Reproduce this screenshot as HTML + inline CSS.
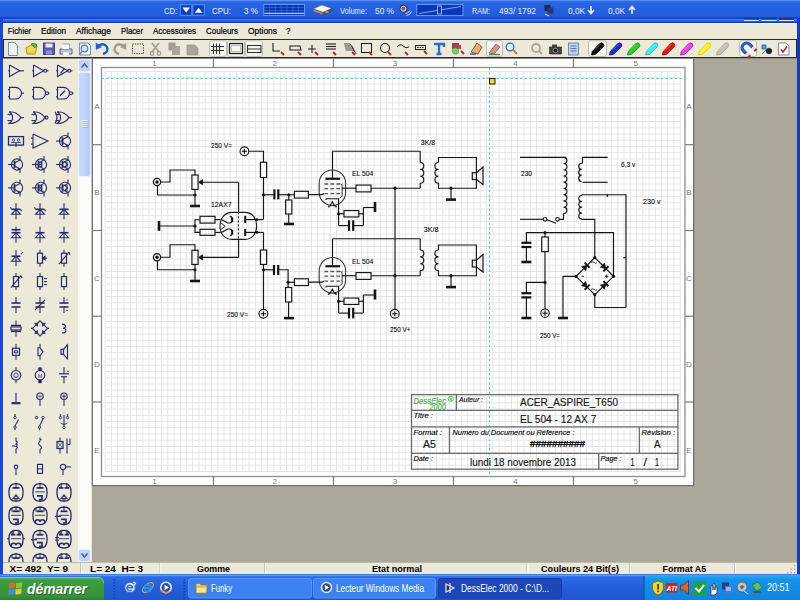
<!DOCTYPE html>
<html><head><meta charset="utf-8"><style>
html,body{margin:0;padding:0;width:800px;height:600px;overflow:hidden;background:#ECE9D8}
svg{position:absolute;left:0;top:0;display:block}
</style></head><body>
<svg width="800" height="600" viewBox="0 0 800 600" shape-rendering="auto">
<rect x="0" y="0" width="800" height="600" fill="#ECE9D8" />
<defs><linearGradient id="tb" x1="0" y1="0" x2="0" y2="1"><stop offset="0" stop-color="#3C7BF0"/><stop offset="0.12" stop-color="#2A66E4"/><stop offset="0.6" stop-color="#245FDF"/><stop offset="1" stop-color="#2259DA"/></linearGradient><linearGradient id="task" x1="0" y1="0" x2="0" y2="1"><stop offset="0" stop-color="#3A81F3"/><stop offset="0.1" stop-color="#2D6CE6"/><stop offset="0.5" stop-color="#245EDB"/><stop offset="1" stop-color="#1F55CF"/></linearGradient><linearGradient id="start" x1="0" y1="0" x2="0" y2="1"><stop offset="0" stop-color="#5EB55E"/><stop offset="0.15" stop-color="#3C9F3C"/><stop offset="0.8" stop-color="#37953A"/><stop offset="1" stop-color="#2F7F32"/></linearGradient><linearGradient id="tray" x1="0" y1="0" x2="0" y2="1"><stop offset="0" stop-color="#2FA6F5"/><stop offset="0.15" stop-color="#1595EC"/><stop offset="1" stop-color="#0F83E0"/></linearGradient><linearGradient id="sbth" x1="0" y1="0" x2="1" y2="0"><stop offset="0" stop-color="#CCDBFD"/><stop offset="0.5" stop-color="#C2D3FB"/><stop offset="1" stop-color="#B4C8F6"/></linearGradient></defs>
<rect x="0" y="0" width="800" height="17.5" fill="url(#tb)" />
<rect x="0" y="17" width="800" height="2.5" fill="#1548C4" />
<rect x="0" y="19.5" width="800" height="2.6" fill="#1C62EC" />
<rect x="0" y="22" width="800" height="1.2" fill="#0A36B8" />
<rect x="0" y="19" width="3" height="555" fill="#1747D4" />
<rect x="797" y="19" width="3" height="555" fill="#0F3EC4" />
<rect x="3" y="23" width="794" height="16" fill="#ECE9D8" />
<rect x="3" y="39" width="794" height="1.5" fill="#2a2a2a" />
<rect x="3" y="40" width="794" height="17" fill="#ECE9D8" />
<rect x="3" y="57" width="794" height="1.5" fill="#2a2a2a" />
<rect x="3" y="40" width="1" height="17" fill="#2a2a2a" />
<rect x="796" y="39" width="1" height="19" fill="#2a2a2a" />
<rect x="3" y="59" width="75" height="503" fill="#ECE9D8" />
<rect x="78" y="59" width="13" height="503" fill="#F5F6FA" />
<rect x="92" y="59" width="705" height="503" fill="#ACA899" />
<rect x="3" y="562" width="794" height="12" fill="#ECE9D8" />
<rect x="0" y="574" width="800" height="26" fill="url(#task)" />
<rect x="93" y="59" width="600" height="426" fill="#FFFFFF" />
<rect x="91.7" y="59" width="1.2" height="427" fill="#6E6E6E" />
<rect x="693" y="59" width="1.2" height="427" fill="#6b6b6b" />
<rect x="92" y="485" width="602" height="1.2" fill="#6b6b6b" />
<path d="M105.250,71V472M111.500,71V472M117.750,71V472M124.000,71V472M130.250,71V472M136.500,71V472M142.750,71V472M149.000,71V472M155.250,71V472M161.500,71V472M167.750,71V472M174.000,71V472M180.250,71V472M186.500,71V472M192.750,71V472M199.000,71V472M205.250,71V472M211.500,71V472M217.750,71V472M224.000,71V472M230.250,71V472M236.500,71V472M242.750,71V472M249.000,71V472M255.250,71V472M261.500,71V472M267.750,71V472M274.000,71V472M280.250,71V472M286.500,71V472M292.750,71V472M299.000,71V472M305.250,71V472M311.500,71V472M317.750,71V472M324.000,71V472M330.250,71V472M336.500,71V472M342.750,71V472M349.000,71V472M355.250,71V472M361.500,71V472M367.750,71V472M374.000,71V472M380.250,71V472M386.500,71V472M392.750,71V472M399.000,71V472M405.250,71V472M411.500,71V472M417.750,71V472M424.000,71V472M430.250,71V472M436.500,71V472M442.750,71V472M449.000,71V472M455.250,71V472M461.500,71V472M467.750,71V472M474.000,71V472M480.250,71V472M486.500,71V472M492.750,71V472M499.000,71V472M505.250,71V472M511.500,71V472M517.750,71V472M524.000,71V472M530.250,71V472M536.500,71V472M542.750,71V472M549.000,71V472M555.250,71V472M561.500,71V472M567.750,71V472M574.000,71V472M580.250,71V472M586.500,71V472M592.750,71V472M599.000,71V472M605.250,71V472M611.500,71V472M617.750,71V472M624.000,71V472M630.250,71V472M636.500,71V472M642.750,71V472M649.000,71V472M655.250,71V472M661.500,71V472M667.750,71V472M674.000,71V472M680.250,71V472M105,71.500H681M105,77.750H681M105,84.000H681M105,90.250H681M105,96.500H681M105,102.750H681M105,109.000H681M105,115.250H681M105,121.500H681M105,127.750H681M105,134.000H681M105,140.250H681M105,146.500H681M105,152.750H681M105,159.000H681M105,165.250H681M105,171.500H681M105,177.750H681M105,184.000H681M105,190.250H681M105,196.500H681M105,202.750H681M105,209.000H681M105,215.250H681M105,221.500H681M105,227.750H681M105,234.000H681M105,240.250H681M105,246.500H681M105,252.750H681M105,259.000H681M105,265.250H681M105,271.500H681M105,277.750H681M105,284.000H681M105,290.250H681M105,296.500H681M105,302.750H681M105,309.000H681M105,315.250H681M105,321.500H681M105,327.750H681M105,334.000H681M105,340.250H681M105,346.500H681M105,352.750H681M105,359.000H681M105,365.250H681M105,371.500H681M105,377.750H681M105,384.000H681M105,390.250H681M105,396.500H681M105,402.750H681M105,409.000H681M105,415.250H681M105,421.500H681M105,427.750H681M105,434.000H681M105,440.250H681M105,446.500H681M105,452.750H681M105,459.000H681M105,465.250H681M105,471.500H681" stroke="#E5E5E5" stroke-width="1" fill="none"/>
<rect x="101.50" y="67.50" width="583.50" height="409.00" stroke="#8E8E8E" stroke-width="1.3" fill="none" />
<line x1="213.50" y1="59.00" x2="213.50" y2="67.50" stroke="#7a7a7a" stroke-width="1.2" />
<line x1="213.50" y1="476.00" x2="213.50" y2="485.00" stroke="#7a7a7a" stroke-width="1.2" />
<line x1="333.50" y1="59.00" x2="333.50" y2="67.50" stroke="#7a7a7a" stroke-width="1.2" />
<line x1="333.50" y1="476.00" x2="333.50" y2="485.00" stroke="#7a7a7a" stroke-width="1.2" />
<line x1="453.50" y1="59.00" x2="453.50" y2="67.50" stroke="#7a7a7a" stroke-width="1.2" />
<line x1="453.50" y1="476.00" x2="453.50" y2="485.00" stroke="#7a7a7a" stroke-width="1.2" />
<line x1="573.50" y1="59.00" x2="573.50" y2="67.50" stroke="#7a7a7a" stroke-width="1.2" />
<line x1="573.50" y1="476.00" x2="573.50" y2="485.00" stroke="#7a7a7a" stroke-width="1.2" />
<line x1="92.00" y1="144.70" x2="101.50" y2="144.70" stroke="#7a7a7a" stroke-width="1.2" />
<line x1="685.00" y1="144.70" x2="693.00" y2="144.70" stroke="#7a7a7a" stroke-width="1.2" />
<line x1="92.00" y1="230.50" x2="101.50" y2="230.50" stroke="#7a7a7a" stroke-width="1.2" />
<line x1="685.00" y1="230.50" x2="693.00" y2="230.50" stroke="#7a7a7a" stroke-width="1.2" />
<line x1="92.00" y1="316.20" x2="101.50" y2="316.20" stroke="#7a7a7a" stroke-width="1.2" />
<line x1="685.00" y1="316.20" x2="693.00" y2="316.20" stroke="#7a7a7a" stroke-width="1.2" />
<line x1="92.00" y1="402.00" x2="101.50" y2="402.00" stroke="#7a7a7a" stroke-width="1.2" />
<line x1="685.00" y1="402.00" x2="693.00" y2="402.00" stroke="#7a7a7a" stroke-width="1.2" />
<text x="154.5" y="66" font-family="Liberation Sans" font-size="8" fill="#777" text-anchor="middle" font-weight="normal" font-style="normal" xml:space="preserve" >1</text>
<text x="154.5" y="484" font-family="Liberation Sans" font-size="8" fill="#777" text-anchor="middle" font-weight="normal" font-style="normal" xml:space="preserve" >1</text>
<text x="274.8" y="66" font-family="Liberation Sans" font-size="8" fill="#777" text-anchor="middle" font-weight="normal" font-style="normal" xml:space="preserve" >2</text>
<text x="274.8" y="484" font-family="Liberation Sans" font-size="8" fill="#777" text-anchor="middle" font-weight="normal" font-style="normal" xml:space="preserve" >2</text>
<text x="395.1" y="66" font-family="Liberation Sans" font-size="8" fill="#777" text-anchor="middle" font-weight="normal" font-style="normal" xml:space="preserve" >3</text>
<text x="395.1" y="484" font-family="Liberation Sans" font-size="8" fill="#777" text-anchor="middle" font-weight="normal" font-style="normal" xml:space="preserve" >3</text>
<text x="515.4" y="66" font-family="Liberation Sans" font-size="8" fill="#777" text-anchor="middle" font-weight="normal" font-style="normal" xml:space="preserve" >4</text>
<text x="515.4" y="484" font-family="Liberation Sans" font-size="8" fill="#777" text-anchor="middle" font-weight="normal" font-style="normal" xml:space="preserve" >4</text>
<text x="635.7" y="66" font-family="Liberation Sans" font-size="8" fill="#777" text-anchor="middle" font-weight="normal" font-style="normal" xml:space="preserve" >5</text>
<text x="635.7" y="484" font-family="Liberation Sans" font-size="8" fill="#777" text-anchor="middle" font-weight="normal" font-style="normal" xml:space="preserve" >5</text>
<text x="96.8" y="108.9" font-family="Liberation Sans" font-size="8" fill="#777" text-anchor="middle" font-weight="normal" font-style="normal" xml:space="preserve" >A</text>
<text x="689" y="108.9" font-family="Liberation Sans" font-size="8" fill="#777" text-anchor="middle" font-weight="normal" font-style="normal" xml:space="preserve" >A</text>
<text x="96.8" y="194.9" font-family="Liberation Sans" font-size="8" fill="#777" text-anchor="middle" font-weight="normal" font-style="normal" xml:space="preserve" >B</text>
<text x="689" y="194.9" font-family="Liberation Sans" font-size="8" fill="#777" text-anchor="middle" font-weight="normal" font-style="normal" xml:space="preserve" >B</text>
<text x="96.8" y="280.9" font-family="Liberation Sans" font-size="8" fill="#777" text-anchor="middle" font-weight="normal" font-style="normal" xml:space="preserve" >C</text>
<text x="689" y="280.9" font-family="Liberation Sans" font-size="8" fill="#777" text-anchor="middle" font-weight="normal" font-style="normal" xml:space="preserve" >C</text>
<text x="96.8" y="366.9" font-family="Liberation Sans" font-size="8" fill="#777" text-anchor="middle" font-weight="normal" font-style="normal" xml:space="preserve" >D</text>
<text x="689" y="366.9" font-family="Liberation Sans" font-size="8" fill="#777" text-anchor="middle" font-weight="normal" font-style="normal" xml:space="preserve" >D</text>
<text x="96.8" y="452.9" font-family="Liberation Sans" font-size="8" fill="#777" text-anchor="middle" font-weight="normal" font-style="normal" xml:space="preserve" >E</text>
<text x="689" y="452.9" font-family="Liberation Sans" font-size="8" fill="#777" text-anchor="middle" font-weight="normal" font-style="normal" xml:space="preserve" >E</text>
<line x1="101.50" y1="78.50" x2="685.00" y2="78.50" stroke="#62CACA" stroke-width="1" stroke-dasharray="2.5,2.2"/>
<line x1="489.50" y1="67.50" x2="489.50" y2="476.00" stroke="#62CACA" stroke-width="1" stroke-dasharray="2.5,2.2"/>
<rect x="489.5" y="78.5" width="5.5" height="5.5" fill="#F2D838" stroke="#1a1a00" stroke-width="1"/>
<circle cx="157.00" cy="182.00" r="3.60" stroke="#141414" stroke-width="1.3" fill="none"/>
<circle cx="157.00" cy="182.00" r="1.7" fill="#141414"/>
<polyline points="160.60,182.00 170.00,182.00 170.00,170.00 195.00,170.00 195.00,175.00" stroke="#141414" stroke-width="1.15" fill="none" />
<rect x="191.90" y="175.00" width="6.20" height="14.40" stroke="#141414" stroke-width="1.15" fill="none" />
<polyline points="195.00,189.40 195.00,206.00" stroke="#141414" stroke-width="1.15" fill="none" />
<polyline points="157.50,185.60 157.50,195.00 195.00,195.00" stroke="#141414" stroke-width="1.15" fill="none" />
<circle cx="195.00" cy="195.00" r="1.6" fill="#141414"/>
<line x1="190.00" y1="206.00" x2="200.00" y2="206.00" stroke="#141414" stroke-width="2.6" />
<polyline points="201.00,182.20 238.60,182.20" stroke="#141414" stroke-width="1.15" fill="none" />
<polygon points="198.60,182.20 202.60,179.60 202.60,184.80" stroke="#141414" stroke-width="0.8" fill="#141414" />
<circle cx="157.00" cy="257.25" r="3.60" stroke="#141414" stroke-width="1.3" fill="none"/>
<circle cx="157.00" cy="257.25" r="1.7" fill="#141414"/>
<polyline points="160.60,257.25 170.00,257.25 170.00,244.75 195.00,244.75 195.00,250.25" stroke="#141414" stroke-width="1.15" fill="none" />
<rect x="191.90" y="250.25" width="6.20" height="14.15" stroke="#141414" stroke-width="1.15" fill="none" />
<polyline points="195.00,264.40 195.00,281.00" stroke="#141414" stroke-width="1.15" fill="none" />
<polyline points="157.50,260.85 157.50,269.75 195.00,269.75" stroke="#141414" stroke-width="1.15" fill="none" />
<circle cx="195.00" cy="269.75" r="1.6" fill="#141414"/>
<line x1="190.00" y1="281.00" x2="200.00" y2="281.00" stroke="#141414" stroke-width="2.6" />
<polyline points="201.00,257.40 238.60,257.40" stroke="#141414" stroke-width="1.15" fill="none" />
<polygon points="198.60,257.40 202.60,254.80 202.60,260.00" stroke="#141414" stroke-width="0.8" fill="#141414" />
<polyline points="238.60,182.20 238.60,212.20" stroke="#141414" stroke-width="1.15" fill="none" />
<polyline points="238.60,239.80 238.60,257.40" stroke="#141414" stroke-width="1.15" fill="none" />
<line x1="238.40" y1="212.20" x2="238.40" y2="239.80" stroke="#141414" stroke-width="1.1" stroke-dasharray="2.4,1.6"/>
<path d="M232,212.4 H245 C252.5,212.4 256.6,218.5 256.6,226 C256.6,233.5 252.5,239.4 245,239.4 H232 C224.5,239.4 220,233.5 220,226 C220,218.5 224.5,212.4 232,212.4 Z" stroke="#1a1a1a" stroke-width="1.1" fill="none" />
<line x1="245.20" y1="215.80" x2="245.20" y2="223.00" stroke="#141414" stroke-width="2.0" />
<line x1="245.20" y1="229.00" x2="245.20" y2="236.00" stroke="#141414" stroke-width="2.0" />
<polyline points="245.20,219.60 263.50,219.60" stroke="#141414" stroke-width="1.15" fill="none" />
<polyline points="245.20,232.40 263.50,232.40" stroke="#141414" stroke-width="1.15" fill="none" />
<circle cx="257.00" cy="219.60" r="1.4" fill="#141414"/>
<circle cx="257.00" cy="232.40" r="1.4" fill="#141414"/>
<path d="M229.8,216.3 Q232.2,216.6 232.2,219 V220.6 Q232.2,223 229.5,223 H227.6 L221.4,219.4" stroke="#141414" stroke-width="1.2" fill="none" />
<line x1="232.20" y1="217.50" x2="232.20" y2="222.00" stroke="#141414" stroke-width="2.0" />
<path d="M229.8,235.7 Q232.2,235.4 232.2,233 V231.4 Q232.2,229 229.5,229 H227.6 L221.4,232.6" stroke="#141414" stroke-width="1.2" fill="none" />
<line x1="232.20" y1="230.00" x2="232.20" y2="234.50" stroke="#141414" stroke-width="2.0" />
<path d="M220.6,222.7 L225.2,226.2 L220.6,229.6" stroke="#333" stroke-width="1.0" fill="none" />
<polyline points="215.00,219.60 220.60,219.60" stroke="#141414" stroke-width="1.15" fill="none" />
<polyline points="215.00,232.40 220.60,232.40" stroke="#141414" stroke-width="1.15" fill="none" />
<rect x="200.00" y="216.30" width="15.00" height="6.80" stroke="#141414" stroke-width="1.15" fill="none" />
<rect x="200.00" y="229.30" width="15.00" height="6.00" stroke="#141414" stroke-width="1.15" fill="none" />
<polyline points="200.00,219.70 195.00,219.70 195.00,232.30 200.00,232.30" stroke="#141414" stroke-width="1.15" fill="none" />
<polyline points="159.00,226.00 195.00,226.00" stroke="#141414" stroke-width="1.15" fill="none" />
<circle cx="195.00" cy="226.00" r="1.6" fill="#141414"/>
<line x1="159.00" y1="221.00" x2="159.00" y2="230.80" stroke="#141414" stroke-width="2.6" />
<text x="211" y="207" font-family="Liberation Sans" font-size="7.6" fill="#000" text-anchor="start" font-weight="normal" font-style="normal" textLength="20.5" lengthAdjust="spacingAndGlyphs" xml:space="preserve" stroke="#000" stroke-width="0.08">12AX7</text>
<text x="211" y="148.2" font-family="Liberation Sans" font-size="7.6" fill="#000" text-anchor="start" font-weight="normal" font-style="normal" textLength="21" lengthAdjust="spacingAndGlyphs" xml:space="preserve" stroke="#000" stroke-width="0.08">250 V=</text>
<circle cx="244.40" cy="151.25" r="4.40" stroke="#141414" stroke-width="1.1" fill="none"/>
<line x1="241.80" y1="151.25" x2="247.00" y2="151.25" stroke="#141414" stroke-width="1.1" />
<line x1="244.40" y1="148.65" x2="244.40" y2="153.85" stroke="#141414" stroke-width="1.1" />
<polyline points="248.80,151.25 263.50,151.25 263.50,162.25" stroke="#141414" stroke-width="1.15" fill="none" />
<rect x="260.40" y="162.25" width="6.20" height="15.25" stroke="#141414" stroke-width="1.15" fill="none" />
<polyline points="263.50,177.50 263.50,219.30" stroke="#141414" stroke-width="1.15" fill="none" />
<circle cx="263.50" cy="194.75" r="1.6" fill="#141414"/>
<polyline points="263.50,194.75 274.20,194.75" stroke="#141414" stroke-width="1.15" fill="none" />
<line x1="274.40" y1="189.40" x2="274.40" y2="199.40" stroke="#141414" stroke-width="2.2" />
<line x1="278.30" y1="189.40" x2="278.30" y2="199.40" stroke="#141414" stroke-width="2.2" />
<polyline points="278.30,194.75 294.40,194.75" stroke="#141414" stroke-width="1.15" fill="none" />
<circle cx="288.75" cy="194.75" r="1.6" fill="#141414"/>
<polyline points="288.75,194.75 288.75,200.00" stroke="#141414" stroke-width="1.15" fill="none" />
<rect x="285.65" y="200.00" width="6.20" height="14.00" stroke="#141414" stroke-width="1.15" fill="none" />
<polyline points="288.75,214.00 288.75,224.00" stroke="#141414" stroke-width="1.15" fill="none" />
<line x1="284.00" y1="224.00" x2="294.00" y2="224.00" stroke="#141414" stroke-width="2.6" />
<polyline points="263.50,232.40 263.50,250.00" stroke="#141414" stroke-width="1.15" fill="none" />
<rect x="260.40" y="250.00" width="6.20" height="14.40" stroke="#141414" stroke-width="1.15" fill="none" />
<polyline points="263.50,264.40 263.50,309.30" stroke="#141414" stroke-width="1.15" fill="none" />
<circle cx="263.50" cy="269.75" r="1.6" fill="#141414"/>
<circle cx="263.40" cy="313.75" r="4.40" stroke="#141414" stroke-width="1.1" fill="none"/>
<line x1="260.80" y1="313.75" x2="266.00" y2="313.75" stroke="#141414" stroke-width="1.1" />
<line x1="263.40" y1="311.15" x2="263.40" y2="316.35" stroke="#141414" stroke-width="1.1" />
<text x="227" y="317" font-family="Liberation Sans" font-size="7.6" fill="#000" text-anchor="start" font-weight="normal" font-style="normal" textLength="21" lengthAdjust="spacingAndGlyphs" xml:space="preserve" stroke="#000" stroke-width="0.08">250 V=</text>
<polyline points="263.50,269.75 273.90,269.75" stroke="#141414" stroke-width="1.15" fill="none" />
<line x1="274.00" y1="265.00" x2="274.00" y2="275.00" stroke="#141414" stroke-width="2.2" />
<line x1="278.20" y1="265.00" x2="278.20" y2="275.00" stroke="#141414" stroke-width="2.2" />
<polyline points="278.20,269.75 288.10,269.75 288.10,287.50" stroke="#141414" stroke-width="1.15" fill="none" />
<circle cx="288.10" cy="282.25" r="1.6" fill="#141414"/>
<polyline points="288.10,282.25 294.40,282.25" stroke="#141414" stroke-width="1.15" fill="none" />
<rect x="285.50" y="287.50" width="6.20" height="14.50" stroke="#141414" stroke-width="1.15" fill="none" />
<polyline points="288.60,302.00 288.60,318.10" stroke="#141414" stroke-width="1.15" fill="none" />
<line x1="284.00" y1="318.10" x2="294.00" y2="318.10" stroke="#141414" stroke-width="2.6" />
<polyline points="332.50,151.25 420.20,151.25" stroke="#141414" stroke-width="1.15" fill="none" />
<polyline points="332.50,151.25 332.50,178.75" stroke="#141414" stroke-width="1.15" fill="none" />
<line x1="325.40" y1="178.75" x2="340.20" y2="178.75" stroke="#141414" stroke-width="2.2" />
<rect x="319.20" y="170.00" width="26.40" height="35.60" stroke="#3a3a3a" stroke-width="1.1" fill="none" rx="13.2" ry="13.2"/>
<line x1="324.50" y1="184.00" x2="343.00" y2="184.00" stroke="#505050" stroke-width="1.3" stroke-dasharray="3.6,2.4"/>
<line x1="324.50" y1="188.60" x2="343.00" y2="188.60" stroke="#505050" stroke-width="1.3" stroke-dasharray="3.6,2.4"/>
<line x1="324.50" y1="193.60" x2="343.00" y2="193.60" stroke="#505050" stroke-width="1.3" stroke-dasharray="3.6,2.4"/>
<path d="M340.5,184.00 q1.6,0 1.6,1.8 V196.00 L340.00,198.20" stroke="#404040" stroke-width="1.0" fill="none" />
<polyline points="342.00,188.20 356.00,188.20" stroke="#141414" stroke-width="1.15" fill="none" />
<rect x="356.00" y="185.10" width="15.00" height="6.80" stroke="#141414" stroke-width="1.15" fill="none" />
<polyline points="371.00,188.20 420.20,188.20" stroke="#141414" stroke-width="1.15" fill="none" />
<circle cx="395.00" cy="188.20" r="1.6" fill="#141414"/>
<rect x="294.40" y="191.30" width="14.00" height="6.80" stroke="#141414" stroke-width="1.15" fill="none" />
<polyline points="308.40,194.60 322.20,194.60 324.00,193.40" stroke="#141414" stroke-width="1.15" fill="none" />
<polyline points="326.00,200.00 326.00,198.75" stroke="#141414" stroke-width="1.15" fill="none" />
<polyline points="326.00,198.75 338.60,198.75 338.60,225.60" stroke="#141414" stroke-width="1.15" fill="none" />
<circle cx="338.60" cy="213.75" r="1.6" fill="#141414"/>
<polyline points="338.60,213.75 344.00,213.75" stroke="#141414" stroke-width="1.15" fill="none" />
<rect x="344.00" y="210.55" width="14.80" height="6.40" stroke="#141414" stroke-width="1.15" fill="none" />
<polyline points="358.80,213.75 363.40,213.75" stroke="#141414" stroke-width="1.15" fill="none" />
<polyline points="363.40,207.50 363.40,225.60" stroke="#141414" stroke-width="1.15" fill="none" />
<polyline points="363.40,207.50 375.00,207.50" stroke="#141414" stroke-width="1.15" fill="none" />
<line x1="375.00" y1="202.00" x2="375.00" y2="212.00" stroke="#141414" stroke-width="2.6" />
<polyline points="338.60,225.60 349.00,225.60" stroke="#141414" stroke-width="1.15" fill="none" />
<line x1="349.00" y1="220.30" x2="349.00" y2="230.90" stroke="#141414" stroke-width="2.2" />
<line x1="353.20" y1="220.30" x2="353.20" y2="230.90" stroke="#141414" stroke-width="2.2" />
<polyline points="353.20,225.60 363.40,225.60" stroke="#141414" stroke-width="1.15" fill="none" />
<path d="M328.8,207.60 V206.00 H330 L332.3,201.80 L334.6,206.00 H336 V207.60" stroke="#141414" stroke-width="1.15" fill="none" />
<text x="352" y="176" font-family="Liberation Sans" font-size="7.6" fill="#000" text-anchor="start" font-weight="normal" font-style="normal" textLength="21.3" lengthAdjust="spacingAndGlyphs" xml:space="preserve" stroke="#000" stroke-width="0.08">EL 504</text>
<polyline points="420.20,151.25 420.20,162.50" stroke="#141414" stroke-width="1.15" fill="none" />
<path d="M420.20,162.50 C424.99,162.50 424.99,169.37 420.20,169.37 C424.99,169.37 424.99,176.23 420.20,176.23 C424.99,176.23 424.99,183.10 420.20,183.10" stroke="#141414" stroke-width="1.15" fill="none" />
<polyline points="420.20,183.10 420.20,188.20" stroke="#141414" stroke-width="1.15" fill="none" />
<polyline points="476.40,172.70 476.40,157.50 438.50,157.50 438.50,162.50" stroke="#141414" stroke-width="1.15" fill="none" />
<path d="M438.50,162.50 C433.71,162.50 433.71,169.37 438.50,169.37 C433.71,169.37 433.71,176.23 438.50,176.23 C433.71,176.23 433.71,183.10 438.50,183.10" stroke="#141414" stroke-width="1.15" fill="none" />
<polyline points="438.50,183.10 438.50,188.20 476.40,188.20 476.40,179.50" stroke="#141414" stroke-width="1.15" fill="none" />
<rect x="472.30" y="172.70" width="4.10" height="6.80" stroke="#141414" stroke-width="1.2" fill="none" />
<polyline points="476.40,172.70 483.00,167.00 483.00,184.50 476.40,179.50" stroke="#141414" stroke-width="1.2" fill="none" />
<circle cx="451.00" cy="188.20" r="1.6" fill="#141414"/>
<polyline points="451.00,188.20 451.00,199.40" stroke="#141414" stroke-width="1.15" fill="none" />
<line x1="446.00" y1="199.60" x2="456.00" y2="199.60" stroke="#141414" stroke-width="2.6" />
<polyline points="332.50,238.75 420.20,238.75" stroke="#141414" stroke-width="1.15" fill="none" />
<polyline points="332.50,238.75 332.50,266.25" stroke="#141414" stroke-width="1.15" fill="none" />
<line x1="325.40" y1="266.25" x2="340.20" y2="266.25" stroke="#141414" stroke-width="2.2" />
<rect x="319.20" y="257.50" width="26.40" height="35.60" stroke="#3a3a3a" stroke-width="1.1" fill="none" rx="13.2" ry="13.2"/>
<line x1="324.50" y1="271.50" x2="343.00" y2="271.50" stroke="#505050" stroke-width="1.3" stroke-dasharray="3.6,2.4"/>
<line x1="324.50" y1="276.10" x2="343.00" y2="276.10" stroke="#505050" stroke-width="1.3" stroke-dasharray="3.6,2.4"/>
<line x1="324.50" y1="281.10" x2="343.00" y2="281.10" stroke="#505050" stroke-width="1.3" stroke-dasharray="3.6,2.4"/>
<path d="M340.5,271.50 q1.6,0 1.6,1.8 V283.50 L340.00,285.70" stroke="#404040" stroke-width="1.0" fill="none" />
<polyline points="342.00,275.70 356.00,275.70" stroke="#141414" stroke-width="1.15" fill="none" />
<rect x="356.00" y="272.60" width="15.00" height="6.80" stroke="#141414" stroke-width="1.15" fill="none" />
<polyline points="371.00,275.70 420.20,275.70" stroke="#141414" stroke-width="1.15" fill="none" />
<circle cx="395.00" cy="275.70" r="1.6" fill="#141414"/>
<rect x="294.40" y="278.80" width="14.00" height="6.80" stroke="#141414" stroke-width="1.15" fill="none" />
<polyline points="308.40,282.10 322.20,282.10 324.00,280.90" stroke="#141414" stroke-width="1.15" fill="none" />
<polyline points="326.00,287.50 326.00,286.25" stroke="#141414" stroke-width="1.15" fill="none" />
<polyline points="326.00,286.25 338.60,286.25 338.60,313.10" stroke="#141414" stroke-width="1.15" fill="none" />
<circle cx="338.60" cy="301.25" r="1.6" fill="#141414"/>
<polyline points="338.60,301.25 344.00,301.25" stroke="#141414" stroke-width="1.15" fill="none" />
<rect x="344.00" y="298.05" width="14.80" height="6.40" stroke="#141414" stroke-width="1.15" fill="none" />
<polyline points="358.80,301.25 363.40,301.25" stroke="#141414" stroke-width="1.15" fill="none" />
<polyline points="363.40,295.00 363.40,313.10" stroke="#141414" stroke-width="1.15" fill="none" />
<polyline points="363.40,295.00 375.00,295.00" stroke="#141414" stroke-width="1.15" fill="none" />
<line x1="375.00" y1="289.50" x2="375.00" y2="299.50" stroke="#141414" stroke-width="2.6" />
<polyline points="338.60,313.10 349.00,313.10" stroke="#141414" stroke-width="1.15" fill="none" />
<line x1="349.00" y1="307.80" x2="349.00" y2="318.40" stroke="#141414" stroke-width="2.2" />
<line x1="353.20" y1="307.80" x2="353.20" y2="318.40" stroke="#141414" stroke-width="2.2" />
<polyline points="353.20,313.10 363.40,313.10" stroke="#141414" stroke-width="1.15" fill="none" />
<path d="M328.8,295.10 V293.50 H330 L332.3,289.30 L334.6,293.50 H336 V295.10" stroke="#141414" stroke-width="1.15" fill="none" />
<text x="352" y="263.5" font-family="Liberation Sans" font-size="7.6" fill="#000" text-anchor="start" font-weight="normal" font-style="normal" textLength="21.3" lengthAdjust="spacingAndGlyphs" xml:space="preserve" stroke="#000" stroke-width="0.08">EL 504</text>
<polyline points="420.20,238.75 420.20,250.00" stroke="#141414" stroke-width="1.15" fill="none" />
<path d="M420.20,250.00 C424.99,250.00 424.99,256.87 420.20,256.87 C424.99,256.87 424.99,263.73 420.20,263.73 C424.99,263.73 424.99,270.60 420.20,270.60" stroke="#141414" stroke-width="1.15" fill="none" />
<polyline points="420.20,270.60 420.20,275.70" stroke="#141414" stroke-width="1.15" fill="none" />
<polyline points="476.40,260.20 476.40,245.00 438.50,245.00 438.50,250.00" stroke="#141414" stroke-width="1.15" fill="none" />
<path d="M438.50,250.00 C433.71,250.00 433.71,256.87 438.50,256.87 C433.71,256.87 433.71,263.73 438.50,263.73 C433.71,263.73 433.71,270.60 438.50,270.60" stroke="#141414" stroke-width="1.15" fill="none" />
<polyline points="438.50,270.60 438.50,275.70 476.40,275.70 476.40,267.00" stroke="#141414" stroke-width="1.15" fill="none" />
<rect x="472.30" y="260.20" width="4.10" height="6.80" stroke="#141414" stroke-width="1.2" fill="none" />
<polyline points="476.40,260.20 483.00,254.50 483.00,272.00 476.40,267.00" stroke="#141414" stroke-width="1.2" fill="none" />
<circle cx="451.00" cy="275.70" r="1.6" fill="#141414"/>
<polyline points="451.00,275.70 451.00,286.90" stroke="#141414" stroke-width="1.15" fill="none" />
<line x1="446.00" y1="287.10" x2="456.00" y2="287.10" stroke="#141414" stroke-width="2.6" />
<text x="420.8" y="145" font-family="Liberation Sans" font-size="7.6" fill="#000" text-anchor="start" font-weight="normal" font-style="normal" textLength="14.4" lengthAdjust="spacingAndGlyphs" xml:space="preserve" stroke="#000" stroke-width="0.08">3K/8</text>
<text x="423.8" y="232.2" font-family="Liberation Sans" font-size="7.6" fill="#000" text-anchor="start" font-weight="normal" font-style="normal" textLength="14.7" lengthAdjust="spacingAndGlyphs" xml:space="preserve" stroke="#000" stroke-width="0.08">3K/8</text>
<polyline points="395.00,188.20 395.00,309.40" stroke="#141414" stroke-width="1.15" fill="none" />
<circle cx="394.80" cy="313.75" r="4.40" stroke="#141414" stroke-width="1.1" fill="none"/>
<line x1="392.20" y1="313.75" x2="397.40" y2="313.75" stroke="#141414" stroke-width="1.1" />
<line x1="394.80" y1="311.15" x2="394.80" y2="316.35" stroke="#141414" stroke-width="1.1" />
<text x="390" y="332" font-family="Liberation Sans" font-size="7.6" fill="#000" text-anchor="start" font-weight="normal" font-style="normal" textLength="20.5" lengthAdjust="spacingAndGlyphs" xml:space="preserve" stroke="#000" stroke-width="0.08">250 V+</text>
<polyline points="520.00,157.30 566.30,157.30" stroke="#141414" stroke-width="1.15" fill="none" />
<path d="M563.50,157.30 C568.02,157.30 568.02,163.52 563.50,163.52 C568.02,163.52 568.02,169.74 563.50,169.74 C568.02,169.74 568.02,175.97 563.50,175.97 C568.02,175.97 568.02,182.19 563.50,182.19 C568.02,182.19 568.02,188.41 563.50,188.41 C568.02,188.41 568.02,194.63 563.50,194.63 C568.02,194.63 568.02,200.86 563.50,200.86 C568.02,200.86 568.02,207.08 563.50,207.08 C568.02,207.08 568.02,213.30 563.50,213.30" stroke="#141414" stroke-width="1.15" fill="none" />
<polyline points="563.50,213.30 563.50,219.30 559.30,219.30" stroke="#141414" stroke-width="1.15" fill="none" />
<circle cx="557.50" cy="219.30" r="1.80" stroke="#141414" stroke-width="1.1" fill="none"/>
<circle cx="545.00" cy="219.30" r="1.80" stroke="#141414" stroke-width="1.1" fill="none"/>
<polyline points="546.80,219.80 556.00,223.20" stroke="#141414" stroke-width="1.15" fill="none" />
<polyline points="520.00,219.30 543.20,219.30" stroke="#141414" stroke-width="1.15" fill="none" />
<text x="521" y="176" font-family="Liberation Sans" font-size="7.6" fill="#000" text-anchor="start" font-weight="normal" font-style="normal" textLength="11" lengthAdjust="spacingAndGlyphs" xml:space="preserve" stroke="#000" stroke-width="0.08">230</text>
<polyline points="607.70,157.30 582.50,157.30 582.50,163.00 581.60,163.30" stroke="#141414" stroke-width="1.15" fill="none" />
<path d="M581.60,163.30 C577.74,163.30 577.74,169.37 581.60,169.37 C577.74,169.37 577.74,175.43 581.60,175.43 C577.74,175.43 577.74,181.50 581.60,181.50" stroke="#141414" stroke-width="1.15" fill="none" />
<polyline points="582.50,182.30 607.70,182.30" stroke="#141414" stroke-width="1.15" fill="none" />
<text x="621" y="167" font-family="Liberation Sans" font-size="7.6" fill="#000" text-anchor="start" font-weight="normal" font-style="normal" textLength="14.3" lengthAdjust="spacingAndGlyphs" xml:space="preserve" stroke="#000" stroke-width="0.08">6,3 v</text>
<polyline points="626.00,307.50 626.00,194.70 582.00,194.70 582.00,195.50" stroke="#141414" stroke-width="1.15" fill="none" />
<path d="M582.00,195.50 C577.74,195.50 577.74,201.32 582.00,201.32 C577.74,201.32 577.74,207.15 582.00,207.15 C577.74,207.15 577.74,212.98 582.00,212.98 C577.74,212.98 577.74,218.80 582.00,218.80" stroke="#141414" stroke-width="1.15" fill="none" />
<polyline points="582.00,218.80 582.00,219.30 594.80,219.30 594.80,257.50" stroke="#141414" stroke-width="1.15" fill="none" />
<text x="643" y="204" font-family="Liberation Sans" font-size="7.6" fill="#000" text-anchor="start" font-weight="normal" font-style="normal" textLength="17.5" lengthAdjust="spacingAndGlyphs" xml:space="preserve" stroke="#000" stroke-width="0.08">230 v</text>
<polyline points="526.40,242.60 526.40,232.60 613.50,232.60 613.50,276.30" stroke="#141414" stroke-width="1.15" fill="none" />
<circle cx="545.00" cy="232.60" r="1.6" fill="#141414"/>
<polyline points="545.00,232.60 545.00,237.00" stroke="#141414" stroke-width="1.15" fill="none" />
<rect x="541.70" y="237.00" width="6.60" height="14.60" stroke="#141414" stroke-width="1.15" fill="none" />
<polyline points="545.00,251.60 545.00,308.90" stroke="#141414" stroke-width="1.15" fill="none" />
<circle cx="545.00" cy="282.40" r="1.6" fill="#141414"/>
<circle cx="545.00" cy="313.20" r="4.20" stroke="#141414" stroke-width="1.1" fill="none"/>
<line x1="542.40" y1="313.20" x2="547.60" y2="313.20" stroke="#141414" stroke-width="1.1" />
<line x1="545.00" y1="310.60" x2="545.00" y2="315.80" stroke="#141414" stroke-width="1.1" />
<line x1="521.40" y1="242.80" x2="531.40" y2="242.80" stroke="#141414" stroke-width="2.2" />
<line x1="521.40" y1="247.00" x2="531.40" y2="247.00" stroke="#141414" stroke-width="2.2" />
<polyline points="526.40,247.00 526.40,262.00" stroke="#141414" stroke-width="1.15" fill="none" />
<line x1="521.40" y1="262.00" x2="531.40" y2="262.00" stroke="#141414" stroke-width="2.6" />
<polyline points="545.00,282.40 526.40,282.40 526.40,293.00" stroke="#141414" stroke-width="1.15" fill="none" />
<line x1="521.40" y1="293.20" x2="531.40" y2="293.20" stroke="#141414" stroke-width="2.2" />
<line x1="521.40" y1="297.40" x2="531.40" y2="297.40" stroke="#141414" stroke-width="2.2" />
<polyline points="526.40,297.40 526.40,318.00" stroke="#141414" stroke-width="1.15" fill="none" />
<line x1="521.40" y1="318.00" x2="531.40" y2="318.00" stroke="#141414" stroke-width="2.6" />
<text x="540" y="338" font-family="Liberation Sans" font-size="7.6" fill="#000" text-anchor="start" font-weight="normal" font-style="normal" textLength="20" lengthAdjust="spacingAndGlyphs" xml:space="preserve" stroke="#000" stroke-width="0.08">250 V=</text>
<rect x="606.6" y="194.6" width="1.5" height="2.2" fill="#141414" />
<rect x="623.4" y="256.9" width="2.4" height="1.4" fill="#141414" />
<polyline points="576.00,276.30 594.80,257.50 613.50,276.30 594.80,294.60 576.00,276.30" stroke="#141414" stroke-width="1.15" fill="none" />
<circle cx="594.80" cy="257.50" r="1.6" fill="#141414"/>
<circle cx="576.00" cy="276.30" r="1.6" fill="#141414"/>
<circle cx="613.50" cy="276.30" r="1.6" fill="#141414"/>
<circle cx="594.80" cy="294.60" r="1.6" fill="#141414"/>
<polygon points="587.17,265.13 585.75,270.79 581.51,266.55" stroke="#141414" stroke-width="0.6" fill="#141414" />
<line x1="589.71" y1="267.68" x2="584.62" y2="262.59" stroke="#141414" stroke-width="2.0" />
<polygon points="605.91,268.67 600.26,267.24 604.51,263.01" stroke="#141414" stroke-width="0.6" fill="#141414" />
<line x1="603.36" y1="271.21" x2="608.47" y2="266.13" stroke="#141414" stroke-width="2.0" />
<polygon points="587.19,287.19 581.52,285.86 585.70,281.56" stroke="#141414" stroke-width="0.6" fill="#141414" />
<line x1="584.68" y1="289.77" x2="589.70" y2="284.61" stroke="#141414" stroke-width="2.0" />
<polygon points="605.94,283.70 604.46,289.34 600.26,285.05" stroke="#141414" stroke-width="0.6" fill="#141414" />
<line x1="608.45" y1="286.27" x2="603.42" y2="281.13" stroke="#141414" stroke-width="2.0" />
<polyline points="563.00,318.00 563.00,276.30 576.00,276.30" stroke="#141414" stroke-width="1.15" fill="none" />
<line x1="558.00" y1="318.00" x2="568.00" y2="318.00" stroke="#141414" stroke-width="2.6" />
<polyline points="594.80,294.60 594.80,307.50 626.00,307.50" stroke="#141414" stroke-width="1.15" fill="none" />
<path d="M591,262.5 q1.5,-1.5 3,0 t3,0" stroke="#141414" stroke-width="0.8" fill="none" />
<path d="M591,289.5 q1.5,-1.5 3,0 t3,0" stroke="#141414" stroke-width="0.8" fill="none" />
<line x1="581.50" y1="276.30" x2="584.00" y2="276.30" stroke="#141414" stroke-width="0.9" />
<line x1="605.00" y1="276.30" x2="608.50" y2="276.30" stroke="#141414" stroke-width="0.9" />
<line x1="606.75" y1="274.50" x2="606.75" y2="278.00" stroke="#141414" stroke-width="0.9" />
<rect x="411.50" y="394.60" width="266.40" height="74.60" stroke="#6A6A6A" stroke-width="1.3" fill="none" />
<line x1="411.50" y1="410.40" x2="677.90" y2="410.40" stroke="#6A6A6A" stroke-width="1.3" />
<line x1="411.50" y1="426.80" x2="677.90" y2="426.80" stroke="#6A6A6A" stroke-width="1.3" />
<line x1="411.50" y1="453.40" x2="677.90" y2="453.40" stroke="#6A6A6A" stroke-width="1.3" />
<line x1="456.40" y1="394.60" x2="456.40" y2="410.40" stroke="#6A6A6A" stroke-width="1.3" />
<line x1="449.50" y1="426.80" x2="449.50" y2="453.40" stroke="#6A6A6A" stroke-width="1.3" />
<line x1="639.40" y1="426.80" x2="639.40" y2="453.40" stroke="#6A6A6A" stroke-width="1.3" />
<line x1="598.70" y1="453.40" x2="598.70" y2="469.20" stroke="#6A6A6A" stroke-width="1.3" />
<text x="413.5" y="403.8" font-family="Liberation Sans" font-size="8.6" fill="#46B046" text-anchor="start" font-weight="normal" font-style="italic" textLength="32.5" lengthAdjust="spacingAndGlyphs" xml:space="preserve" stroke="#46B046" stroke-width="0.15">DessElec</text>
<circle cx="450.80" cy="398.80" r="2.60" stroke="#46B046" stroke-width="0.8" fill="none"/>
<text x="449.4" y="400.6" font-family="Liberation Sans" font-size="3.6" fill="#46B046" text-anchor="start" font-weight="bold" font-style="normal" xml:space="preserve" >R</text>
<text x="429.5" y="409.6" font-family="Liberation Sans" font-size="8.6" fill="#46B046" text-anchor="start" font-weight="normal" font-style="italic" textLength="16.5" lengthAdjust="spacingAndGlyphs" xml:space="preserve" stroke="#46B046" stroke-width="0.15">2000</text>
<text x="459" y="401.8" font-family="Liberation Sans" font-size="7.2" fill="#000" text-anchor="start" font-weight="normal" font-style="italic" textLength="24" lengthAdjust="spacingAndGlyphs" xml:space="preserve" stroke="#000" stroke-width="0.12">Auteur :</text>
<text x="413.5" y="418" font-family="Liberation Sans" font-size="7.2" fill="#000" text-anchor="start" font-weight="normal" font-style="italic" textLength="19.5" lengthAdjust="spacingAndGlyphs" xml:space="preserve" stroke="#000" stroke-width="0.12">Titre :</text>
<text x="413.5" y="435" font-family="Liberation Sans" font-size="7.2" fill="#000" text-anchor="start" font-weight="normal" font-style="italic" textLength="28.5" lengthAdjust="spacingAndGlyphs" xml:space="preserve" stroke="#000" stroke-width="0.12">Format :</text>
<text x="452.5" y="435" font-family="Liberation Sans" font-size="7.2" fill="#000" text-anchor="start" font-weight="normal" font-style="italic" textLength="122" lengthAdjust="spacingAndGlyphs" xml:space="preserve" stroke="#000" stroke-width="0.12">Numéro du Document ou Référence :</text>
<text x="641.6" y="435" font-family="Liberation Sans" font-size="7.2" fill="#000" text-anchor="start" font-weight="normal" font-style="italic" textLength="33.5" lengthAdjust="spacingAndGlyphs" xml:space="preserve" stroke="#000" stroke-width="0.12">Révision :</text>
<text x="413.5" y="460.8" font-family="Liberation Sans" font-size="7.2" fill="#000" text-anchor="start" font-weight="normal" font-style="italic" textLength="19.5" lengthAdjust="spacingAndGlyphs" xml:space="preserve" stroke="#000" stroke-width="0.12">Date :</text>
<text x="600.5" y="460.8" font-family="Liberation Sans" font-size="7.2" fill="#000" text-anchor="start" font-weight="normal" font-style="italic" textLength="21" lengthAdjust="spacingAndGlyphs" xml:space="preserve" stroke="#000" stroke-width="0.12">Page :</text>
<text x="520" y="406.3" font-family="Liberation Sans" font-size="10.2" fill="#111" text-anchor="start" font-weight="normal" font-style="normal" textLength="98" lengthAdjust="spacingAndGlyphs" xml:space="preserve" stroke="#111" stroke-width="0.12">ACER_ASPIRE_T650</text>
<text x="520" y="422.8" font-family="Liberation Sans" font-size="10.2" fill="#111" text-anchor="start" font-weight="normal" font-style="normal" textLength="76.3" lengthAdjust="spacingAndGlyphs" xml:space="preserve" stroke="#111" stroke-width="0.12">EL 504 - 12 AX 7</text>
<text x="423" y="447.8" font-family="Liberation Sans" font-size="10.2" fill="#111" text-anchor="start" font-weight="normal" font-style="normal" textLength="13" lengthAdjust="spacingAndGlyphs" xml:space="preserve" stroke="#111" stroke-width="0.12">A5</text>
<text x="654" y="447.8" font-family="Liberation Sans" font-size="10.2" fill="#111" text-anchor="start" font-weight="normal" font-style="normal" textLength="6.5" lengthAdjust="spacingAndGlyphs" xml:space="preserve" stroke="#111" stroke-width="0.12">A</text>
<text x="470" y="466.4" font-family="Liberation Sans" font-size="10.2" fill="#111" text-anchor="start" font-weight="normal" font-style="normal" textLength="106" lengthAdjust="spacingAndGlyphs" xml:space="preserve" stroke="#111" stroke-width="0.12">lundi 18 novembre 2013</text>
<text x="630.5" y="466.4" font-family="Liberation Sans" font-size="10.2" fill="#111" text-anchor="start" font-weight="normal" font-style="normal" textLength="4" lengthAdjust="spacingAndGlyphs" xml:space="preserve" stroke="#111" stroke-width="0.12">1</text>
<text x="643.5" y="466.4" font-family="Liberation Sans" font-size="10.2" fill="#111" text-anchor="start" font-weight="normal" font-style="normal" textLength="3.5" lengthAdjust="spacingAndGlyphs" xml:space="preserve" stroke="#111" stroke-width="0.12">/</text>
<text x="655" y="466.4" font-family="Liberation Sans" font-size="10.2" fill="#111" text-anchor="start" font-weight="normal" font-style="normal" textLength="4" lengthAdjust="spacingAndGlyphs" xml:space="preserve" stroke="#111" stroke-width="0.12">1</text>
<text x="530" y="447" font-family="Liberation Sans" font-size="9.5" fill="#111" text-anchor="start" font-weight="normal" font-style="normal" textLength="55" lengthAdjust="spacingAndGlyphs" xml:space="preserve" stroke="#111" stroke-width="0.35">##########</text>
<defs><clipPath id="palclip"><rect x="3" y="59" width="75" height="503"/></clipPath></defs>
<g clip-path="url(#palclip)"><polyline points="9.5,65.1 19.8,70.8 9.5,76.5 9.5,65.1" stroke="#262B6E" stroke-width="1.1" fill="none"/><polyline points="8.0,70.8 9.5,70.8" stroke="#262B6E" stroke-width="1.1" fill="none"/><polyline points="19.8,70.8 24.0,70.8" stroke="#262B6E" stroke-width="1.1" fill="none"/><polyline points="33.5,65.1 43.8,70.8 33.5,76.5 33.5,65.1" stroke="#262B6E" stroke-width="1.1" fill="none"/><polyline points="32.0,70.8 33.5,70.8" stroke="#262B6E" stroke-width="1.1" fill="none"/><circle cx="45.3" cy="70.8" r="1.5" stroke="#262B6E" stroke-width="1.1" fill="none"/><polyline points="46.8,70.8 48.5,70.8" stroke="#262B6E" stroke-width="1.1" fill="none"/><polyline points="57.5,65.1 67.8,70.8 57.5,76.5 57.5,65.1" stroke="#262B6E" stroke-width="1.1" fill="none"/><polyline points="56.0,70.8 57.5,70.8" stroke="#262B6E" stroke-width="1.1" fill="none"/><circle cx="69.3" cy="70.8" r="1.5" stroke="#262B6E" stroke-width="1.1" fill="none"/><polyline points="70.8,70.8 72.5,70.8" stroke="#262B6E" stroke-width="1.1" fill="none"/><polyline points="60.5,73.3 64.5,68.3" stroke="#262B6E" stroke-width="1.3" fill="none"/><path d="M9.5,87.4H15.5A6,5.8 0 0 1 15.5,99.0H9.5Z" stroke="#262B6E" stroke-width="1.1" fill="none"/><polyline points="8.0,89.7 9.5,89.7" stroke="#262B6E" stroke-width="1.1" fill="none"/><polyline points="8.0,96.7 9.5,96.7" stroke="#262B6E" stroke-width="1.1" fill="none"/><polyline points="21.5,93.2 24.0,93.2" stroke="#262B6E" stroke-width="1.1" fill="none"/><path d="M33.5,87.4H39.5A6,5.8 0 0 1 39.5,99.0H33.5Z" stroke="#262B6E" stroke-width="1.1" fill="none"/><polyline points="32.0,89.7 33.5,89.7" stroke="#262B6E" stroke-width="1.1" fill="none"/><polyline points="32.0,96.7 33.5,96.7" stroke="#262B6E" stroke-width="1.1" fill="none"/><circle cx="47.0" cy="93.2" r="1.5" stroke="#262B6E" stroke-width="1.1" fill="none"/><polyline points="48.5,93.2 49.5,93.2" stroke="#262B6E" stroke-width="1.1" fill="none"/><path d="M57.5,87.4H63.5A6,5.8 0 0 1 63.5,99.0H57.5Z" stroke="#262B6E" stroke-width="1.1" fill="none"/><polyline points="56.0,89.7 57.5,89.7" stroke="#262B6E" stroke-width="1.1" fill="none"/><polyline points="56.0,96.7 57.5,96.7" stroke="#262B6E" stroke-width="1.1" fill="none"/><circle cx="71.0" cy="93.2" r="1.5" stroke="#262B6E" stroke-width="1.1" fill="none"/><polyline points="72.5,93.2 73.5,93.2" stroke="#262B6E" stroke-width="1.1" fill="none"/><polyline points="60.0,95.7 65.0,90.7" stroke="#262B6E" stroke-width="1.3" fill="none"/><path d="M9.0,111.8Q17.0,111.6 21.0,117.6Q17.0,123.6 9.0,123.4Q13.0,120.6 12.5,117.6Q13.0,114.6 9.0,111.8" stroke="#262B6E" stroke-width="1.1" fill="none"/><polyline points="7.5,114.6 12.0,114.6" stroke="#262B6E" stroke-width="1.1" fill="none"/><polyline points="7.5,120.6 12.0,120.6" stroke="#262B6E" stroke-width="1.1" fill="none"/><polyline points="21.0,117.6 24.0,117.6" stroke="#262B6E" stroke-width="1.1" fill="none"/><path d="M33.0,111.8Q41.0,111.6 45.0,117.6Q41.0,123.6 33.0,123.4Q37.0,120.6 36.5,117.6Q37.0,114.6 33.0,111.8" stroke="#262B6E" stroke-width="1.1" fill="none"/><polyline points="31.5,114.6 36.0,114.6" stroke="#262B6E" stroke-width="1.1" fill="none"/><polyline points="31.5,120.6 36.0,120.6" stroke="#262B6E" stroke-width="1.1" fill="none"/><circle cx="46.5" cy="117.6" r="1.5" stroke="#262B6E" stroke-width="1.1" fill="none"/><path d="M57.0,111.8Q65.0,111.6 69.0,117.6Q65.0,123.6 57.0,123.4Q61.0,120.6 60.5,117.6Q61.0,114.6 57.0,111.8" stroke="#262B6E" stroke-width="1.1" fill="none"/><polyline points="55.5,114.6 60.0,114.6" stroke="#262B6E" stroke-width="1.1" fill="none"/><polyline points="55.5,120.6 60.0,120.6" stroke="#262B6E" stroke-width="1.1" fill="none"/><path d="M55.0,111.8Q59.0,117.6 55.0,123.4" stroke="#262B6E" stroke-width="1.1" fill="none"/><polyline points="69.0,117.6 72.0,117.6" stroke="#262B6E" stroke-width="1.1" fill="none"/><rect x="8.5" y="136.6" width="15.0" height="8.5" stroke="#262B6E" stroke-width="1.3" fill="none"/><circle cx="13.5" cy="140.1" r="1.2" stroke="#262B6E" stroke-width="0.9" fill="none"/><circle cx="18.5" cy="140.1" r="1.2" stroke="#262B6E" stroke-width="0.9" fill="none"/><polyline points="16.0,143.1 16.0,147.1" stroke="#262B6E" stroke-width="1.1" fill="none"/><polyline points="11.0,142.6 21.0,142.6" stroke="#262B6E" stroke-width="0.9" fill="none"/><polyline points="33.0,134.1 48.0,141.1 33.0,148.1 33.0,134.1" stroke="#262B6E" stroke-width="1.1" fill="none"/><polyline points="31.0,138.1 33.0,138.1" stroke="#262B6E" stroke-width="1.1" fill="none"/><polyline points="31.0,144.1 33.0,144.1" stroke="#262B6E" stroke-width="1.1" fill="none"/><text x="35.0" y="139.6" font-family="Liberation Sans" font-size="5" fill="#262B6E" text-anchor="middle">.</text><circle cx="65.0" cy="141.1" r="5.6" stroke="#262B6E" stroke-width="1.1" fill="none"/><polyline points="56.0,141.1 62.5,141.1" stroke="#262B6E" stroke-width="1.1" fill="none"/><polyline points="62.5,137.3 62.5,144.9" stroke="#262B6E" stroke-width="1.8" fill="none"/><polyline points="62.5,139.6 68.0,136.6 68.0,132.6" stroke="#262B6E" stroke-width="1.1" fill="none"/><polyline points="62.5,142.6 68.0,145.6 68.0,149.6" stroke="#262B6E" stroke-width="1.1" fill="none"/><path d="M66.0,144.7l2,0.6l-1,1.4z" stroke="#262B6E" stroke-width="0.8" fill="#262B6E"/><circle cx="17.0" cy="164.5" r="5.6" stroke="#262B6E" stroke-width="1.1" fill="none"/><polyline points="8.0,164.5 14.5,164.5" stroke="#262B6E" stroke-width="1.1" fill="none"/><polyline points="14.5,160.7 14.5,168.3" stroke="#262B6E" stroke-width="1.8" fill="none"/><polyline points="14.5,163.0 20.0,160.0 20.0,156.0" stroke="#262B6E" stroke-width="1.1" fill="none"/><polyline points="14.5,166.0 20.0,169.0 20.0,173.0" stroke="#262B6E" stroke-width="1.1" fill="none"/><path d="M18.0,168.1l2,0.6l-1,1.4z" stroke="#262B6E" stroke-width="0.8" fill="#262B6E"/><circle cx="41.0" cy="164.5" r="5.6" stroke="#262B6E" stroke-width="1.1" fill="none"/><polyline points="32.0,164.5 38.5,164.5" stroke="#262B6E" stroke-width="1.1" fill="none"/><polyline points="38.5,160.7 38.5,168.3" stroke="#262B6E" stroke-width="1.8" fill="none"/><polyline points="38.5,163.0 44.0,160.0 44.0,156.0" stroke="#262B6E" stroke-width="1.1" fill="none"/><polyline points="38.5,166.0 44.0,169.0 44.0,173.0" stroke="#262B6E" stroke-width="1.1" fill="none"/><polyline points="41.5,161.5 41.5,167.5" stroke="#262B6E" stroke-width="1.6" fill="none"/><polyline points="38.5,164.5 41.5,164.5" stroke="#262B6E" stroke-width="1.2" fill="none"/><circle cx="65.0" cy="164.5" r="5.6" stroke="#262B6E" stroke-width="1.1" fill="none"/><polyline points="56.0,164.5 62.5,164.5" stroke="#262B6E" stroke-width="1.1" fill="none"/><polyline points="62.5,160.7 62.5,168.3" stroke="#262B6E" stroke-width="1.8" fill="none"/><polyline points="62.5,163.0 68.0,160.0 68.0,156.0" stroke="#262B6E" stroke-width="1.1" fill="none"/><polyline points="62.5,166.0 68.0,169.0 68.0,173.0" stroke="#262B6E" stroke-width="1.1" fill="none"/><polyline points="64.5,161.5 67.5,164.5 64.5,167.5" stroke="#262B6E" stroke-width="1.2" fill="none"/><polyline points="67.0,161.5 67.0,167.5" stroke="#262B6E" stroke-width="1.0" fill="none"/><circle cx="17.0" cy="187.9" r="5.6" stroke="#262B6E" stroke-width="1.1" fill="none"/><polyline points="8.0,187.9 14.5,187.9" stroke="#262B6E" stroke-width="1.1" fill="none"/><polyline points="14.5,184.1 14.5,191.7" stroke="#262B6E" stroke-width="1.8" fill="none"/><polyline points="14.5,186.4 20.0,183.4 20.0,179.4" stroke="#262B6E" stroke-width="1.1" fill="none"/><polyline points="14.5,189.4 20.0,192.4 20.0,196.4" stroke="#262B6E" stroke-width="1.1" fill="none"/><path d="M18.0,191.5l2,0.6l-1,1.4z" stroke="#262B6E" stroke-width="0.8" fill="#262B6E"/><circle cx="41.0" cy="187.9" r="5.6" stroke="#262B6E" stroke-width="1.1" fill="none"/><polyline points="32.0,187.9 38.5,187.9" stroke="#262B6E" stroke-width="1.1" fill="none"/><polyline points="38.5,184.1 38.5,191.7" stroke="#262B6E" stroke-width="1.8" fill="none"/><polyline points="38.5,186.4 44.0,183.4 44.0,179.4" stroke="#262B6E" stroke-width="1.1" fill="none"/><polyline points="38.5,189.4 44.0,192.4 44.0,196.4" stroke="#262B6E" stroke-width="1.1" fill="none"/><polyline points="41.5,184.9 41.5,190.9" stroke="#262B6E" stroke-width="1.6" fill="none"/><polyline points="38.5,187.9 41.5,187.9" stroke="#262B6E" stroke-width="1.2" fill="none"/><circle cx="65.0" cy="187.9" r="5.6" stroke="#262B6E" stroke-width="1.1" fill="none"/><polyline points="56.0,187.9 62.5,187.9" stroke="#262B6E" stroke-width="1.1" fill="none"/><polyline points="62.5,184.1 62.5,191.7" stroke="#262B6E" stroke-width="1.8" fill="none"/><polyline points="62.5,186.4 68.0,183.4 68.0,179.4" stroke="#262B6E" stroke-width="1.1" fill="none"/><polyline points="62.5,189.4 68.0,192.4 68.0,196.4" stroke="#262B6E" stroke-width="1.1" fill="none"/><polyline points="64.5,184.9 67.5,187.9 64.5,190.9" stroke="#262B6E" stroke-width="1.2" fill="none"/><polyline points="67.0,184.9 67.0,190.9" stroke="#262B6E" stroke-width="1.0" fill="none"/><polyline points="16.0,203.3 16.0,219.3" stroke="#262B6E" stroke-width="1.1" fill="none"/><path d="M11.5,214.3L20.5,214.3L16.0,209.3Z" stroke="#262B6E" stroke-width="1.1" fill="none"/><polyline points="11.5,209.3 20.5,209.3" stroke="#262B6E" stroke-width="1.6" fill="none"/><polyline points="11.5,209.3 10.5,207.3" stroke="#262B6E" stroke-width="1.1" fill="none"/><polyline points="20.5,209.3 21.5,211.3" stroke="#262B6E" stroke-width="1.1" fill="none"/><polyline points="16.0,226.7 16.0,242.7" stroke="#262B6E" stroke-width="1.1" fill="none"/><path d="M11.5,237.7L20.5,237.7L16.0,232.7Z" stroke="#262B6E" stroke-width="1.1" fill="none"/><polyline points="11.5,232.7 20.5,232.7" stroke="#262B6E" stroke-width="1.6" fill="none"/><polyline points="11.5,229.7 20.5,229.7" stroke="#262B6E" stroke-width="1.6" fill="none"/><polyline points="40.0,203.3 40.0,219.3" stroke="#262B6E" stroke-width="1.1" fill="none"/><path d="M35.5,214.3L44.5,214.3L40.0,209.3Z" stroke="#262B6E" stroke-width="1.1" fill="none"/><polyline points="35.5,209.3 44.5,209.3" stroke="#262B6E" stroke-width="1.6" fill="none"/><polyline points="35.5,209.3 34.5,207.3" stroke="#262B6E" stroke-width="1.1" fill="none"/><polyline points="44.5,209.3 45.5,211.3" stroke="#262B6E" stroke-width="1.1" fill="none"/><polyline points="40.0,226.7 40.0,242.7" stroke="#262B6E" stroke-width="1.1" fill="none"/><path d="M35.5,237.7L44.5,237.7L40.0,232.7Z" stroke="#262B6E" stroke-width="1.1" fill="none"/><polyline points="35.5,232.7 44.5,232.7" stroke="#262B6E" stroke-width="1.6" fill="none"/><polyline points="64.0,203.3 64.0,219.3" stroke="#262B6E" stroke-width="1.1" fill="none"/><path d="M59.5,214.3L68.5,214.3L64.0,209.3Z" stroke="#262B6E" stroke-width="1.1" fill="none"/><polyline points="59.5,209.3 68.5,209.3" stroke="#262B6E" stroke-width="1.6" fill="none"/><polyline points="64.0,226.7 64.0,242.7" stroke="#262B6E" stroke-width="1.1" fill="none"/><path d="M59.5,237.7L68.5,237.7L64.0,232.7Z" stroke="#262B6E" stroke-width="1.1" fill="none"/><polyline points="59.5,232.7 68.5,232.7" stroke="#262B6E" stroke-width="1.6" fill="none"/><polyline points="16.0,250.2 16.0,266.2" stroke="#262B6E" stroke-width="1.1" fill="none"/><path d="M11.5,261.2L20.5,261.2L16.0,256.2Z" stroke="#262B6E" stroke-width="1.1" fill="none"/><polyline points="11.5,256.2 20.5,256.2" stroke="#262B6E" stroke-width="1.6" fill="none"/><polyline points="21.0,254.2 23.0,252.2" stroke="#262B6E" stroke-width="1.1" fill="none"/><polyline points="40.0,249.7 40.0,253.2" stroke="#262B6E" stroke-width="1.1" fill="none"/><polyline points="40.0,263.2 40.0,266.7" stroke="#262B6E" stroke-width="1.1" fill="none"/><rect x="37.5" y="253.2" width="5.0" height="10.0" stroke="#262B6E" stroke-width="1.2" fill="none"/><polyline points="42.5,258.2 47.0,258.2" stroke="#262B6E" stroke-width="1.1" fill="none"/><path d="M42.5,258.2l2.5,-1.8v3.6z" stroke="#262B6E" stroke-width="1.1" fill="#262B6E"/><polyline points="64.0,249.7 64.0,253.2" stroke="#262B6E" stroke-width="1.1" fill="none"/><polyline points="64.0,263.2 64.0,266.7" stroke="#262B6E" stroke-width="1.1" fill="none"/><rect x="61.5" y="253.2" width="5.0" height="10.0" stroke="#262B6E" stroke-width="1.2" fill="none"/><polyline points="59.0,264.2 69.0,252.2" stroke="#262B6E" stroke-width="1.1" fill="none"/><polyline points="69.0,252.2 70.0,254.7" stroke="#262B6E" stroke-width="1.1" fill="none"/><polyline points="16.0,273.1 16.0,276.6" stroke="#262B6E" stroke-width="1.1" fill="none"/><polyline points="16.0,286.6 16.0,290.1" stroke="#262B6E" stroke-width="1.1" fill="none"/><rect x="13.5" y="276.6" width="5.0" height="10.0" stroke="#262B6E" stroke-width="1.2" fill="none"/><polyline points="11.0,287.6 21.0,275.6" stroke="#262B6E" stroke-width="1.1" fill="none"/><polyline points="21.0,275.6 22.0,278.1" stroke="#262B6E" stroke-width="1.1" fill="none"/><polyline points="40.0,273.1 40.0,276.6" stroke="#262B6E" stroke-width="1.1" fill="none"/><polyline points="40.0,286.6 40.0,290.1" stroke="#262B6E" stroke-width="1.1" fill="none"/><rect x="37.5" y="276.6" width="5.0" height="10.0" stroke="#262B6E" stroke-width="1.2" fill="none"/><polyline points="44.0,278.6 47.0,278.6" stroke="#262B6E" stroke-width="1.1" fill="none"/><polyline points="44.0,281.6 47.0,281.6" stroke="#262B6E" stroke-width="1.1" fill="none"/><polyline points="44.0,284.6 47.0,284.6" stroke="#262B6E" stroke-width="1.1" fill="none"/><polyline points="64.0,273.1 64.0,276.6" stroke="#262B6E" stroke-width="1.1" fill="none"/><polyline points="64.0,286.6 64.0,290.1" stroke="#262B6E" stroke-width="1.1" fill="none"/><rect x="61.5" y="276.6" width="5.0" height="10.0" stroke="#262B6E" stroke-width="1.2" fill="none"/><polyline points="16.0,297.0 16.0,303.0" stroke="#262B6E" stroke-width="1.1" fill="none"/><polyline points="16.0,307.0 16.0,313.0" stroke="#262B6E" stroke-width="1.1" fill="none"/><polyline points="11.5,303.0 20.5,303.0" stroke="#262B6E" stroke-width="1.6" fill="none"/><polyline points="11.5,307.0 20.5,307.0" stroke="#262B6E" stroke-width="1.6" fill="none"/><polyline points="40.0,297.0 40.0,303.0" stroke="#262B6E" stroke-width="1.1" fill="none"/><polyline points="40.0,307.0 40.0,313.0" stroke="#262B6E" stroke-width="1.1" fill="none"/><polyline points="35.5,303.0 44.5,303.0" stroke="#262B6E" stroke-width="1.6" fill="none"/><polyline points="35.5,307.0 44.5,307.0" stroke="#262B6E" stroke-width="1.6" fill="none"/><polyline points="35.0,310.0 45.0,300.0" stroke="#262B6E" stroke-width="1.1" fill="none"/><polyline points="64.0,297.0 64.0,303.0" stroke="#262B6E" stroke-width="1.1" fill="none"/><polyline points="64.0,307.0 64.0,313.0" stroke="#262B6E" stroke-width="1.1" fill="none"/><polyline points="59.5,303.0 68.5,303.0" stroke="#262B6E" stroke-width="1.6" fill="none"/><polyline points="59.5,307.0 68.5,307.0" stroke="#262B6E" stroke-width="1.6" fill="none"/><polyline points="66.0,300.0 68.0,300.0" stroke="#262B6E" stroke-width="0.8" fill="none"/><polyline points="66.0,310.5 68.0,310.5" stroke="#262B6E" stroke-width="0.8" fill="none"/><polyline points="16.0,320.4 16.0,325.4" stroke="#262B6E" stroke-width="1.1" fill="none"/><polyline points="16.0,331.4 16.0,336.4" stroke="#262B6E" stroke-width="1.1" fill="none"/><rect x="11.0" y="326.9" width="10.0" height="3.0" stroke="#262B6E" stroke-width="1.2" fill="none"/><polyline points="11.0,325.4 21.0,325.4" stroke="#262B6E" stroke-width="1.4" fill="none"/><polyline points="11.0,331.4 21.0,331.4" stroke="#262B6E" stroke-width="1.4" fill="none"/><path d="M40.0,320.9L47.5,328.4L40.0,335.9L32.5,328.4Z" stroke="#262B6E" stroke-width="1.1" fill="none"/><polyline points="37.8,326.2 34.7,323.1" stroke="#262B6E" stroke-width="1.4" fill="none"/><circle cx="37.2" cy="323.7" r="1.1" fill="#262B6E"/><polyline points="42.2,326.2 45.3,323.1" stroke="#262B6E" stroke-width="1.4" fill="none"/><circle cx="42.8" cy="323.7" r="1.1" fill="#262B6E"/><polyline points="37.8,330.6 34.7,333.7" stroke="#262B6E" stroke-width="1.4" fill="none"/><circle cx="37.2" cy="333.1" r="1.1" fill="#262B6E"/><polyline points="42.2,330.6 45.3,333.7" stroke="#262B6E" stroke-width="1.4" fill="none"/><circle cx="42.8" cy="333.1" r="1.1" fill="#262B6E"/><polyline points="31.0,328.4 32.5,328.4" stroke="#262B6E" stroke-width="1.1" fill="none"/><polyline points="47.5,328.4 49.0,328.4" stroke="#262B6E" stroke-width="1.1" fill="none"/><path d="M62.0,324.1q3.5,0 3.5,2.2q0,2 -2.5,2q3,0 3,2.3q0,2.5 -4,2.3" stroke="#262B6E" stroke-width="1.1" fill="none"/><polyline points="16.0,343.8 16.0,348.3" stroke="#262B6E" stroke-width="1.1" fill="none"/><polyline points="16.0,355.3 16.0,359.8" stroke="#262B6E" stroke-width="1.1" fill="none"/><rect x="12.5" y="348.3" width="7.0" height="7.0" stroke="#262B6E" stroke-width="1.2" fill="none"/><rect x="14.5" y="350.8" width="3.0" height="2.0" stroke="#262B6E" stroke-width="0.9" fill="none"/><polyline points="40.0,343.8 40.0,347.8" stroke="#262B6E" stroke-width="1.1" fill="none"/><polyline points="40.0,355.8 40.0,359.8" stroke="#262B6E" stroke-width="1.1" fill="none"/><path d="M38.0,347.8h2l3,4l-3,4h-2z" stroke="#262B6E" stroke-width="1.1" fill="none"/><rect x="61.0" y="349.3" width="2.5" height="5.0" stroke="#262B6E" stroke-width="1.2" fill="none"/><path d="M63.5,349.3l4,-4.5v14l-4,-4.5" stroke="#262B6E" stroke-width="1.1" fill="none"/><polyline points="16.0,367.3 16.0,370.3" stroke="#262B6E" stroke-width="1.1" fill="none"/><polyline points="16.0,380.3 16.0,383.3" stroke="#262B6E" stroke-width="1.1" fill="none"/><circle cx="16.0" cy="375.3" r="4.8" stroke="#262B6E" stroke-width="1.2" fill="none"/><circle cx="16.0" cy="375.3" r="2.2" stroke="#262B6E" stroke-width="0.9" fill="none"/><polyline points="40.0,367.3 40.0,370.3" stroke="#262B6E" stroke-width="1.1" fill="none"/><polyline points="40.0,380.3 40.0,383.3" stroke="#262B6E" stroke-width="1.1" fill="none"/><circle cx="40.0" cy="375.3" r="4.8" stroke="#262B6E" stroke-width="1.2" fill="none"/><text x="40.0" y="377.5" font-family="Liberation Sans" font-size="5.5" fill="#262B6E" text-anchor="middle">M</text><rect x="38.8" y="368.1" width="2.4" height="2.4" stroke="#262B6E" stroke-width="1.1" fill="#262B6E"/><rect x="38.8" y="380.1" width="2.4" height="2.4" stroke="#262B6E" stroke-width="1.1" fill="#262B6E"/><polyline points="64.0,367.3 64.0,373.8" stroke="#262B6E" stroke-width="1.1" fill="none"/><polyline points="64.0,376.8 64.0,383.3" stroke="#262B6E" stroke-width="1.1" fill="none"/><polyline points="59.0,373.8 69.0,373.8" stroke="#262B6E" stroke-width="1.2" fill="none"/><polyline points="61.0,376.8 67.0,376.8" stroke="#262B6E" stroke-width="1.2" fill="none"/><polyline points="67.0,371.3 69.0,371.3" stroke="#262B6E" stroke-width="0.8" fill="none"/><polyline points="16.0,392.7 16.0,402.7" stroke="#262B6E" stroke-width="1.1" fill="none"/><polyline points="11.5,403.2 20.5,403.2" stroke="#262B6E" stroke-width="2.2" fill="none"/><circle cx="40.0" cy="396.2" r="3.2" stroke="#262B6E" stroke-width="1.2" fill="none"/><polyline points="38.4,396.2 41.6,396.2" stroke="#262B6E" stroke-width="1.1" fill="none"/><polyline points="40.0,399.4 40.0,405.7" stroke="#262B6E" stroke-width="1.1" fill="none"/><circle cx="64.0" cy="396.2" r="3.2" stroke="#262B6E" stroke-width="1.2" fill="none"/><polyline points="62.4,396.2 65.6,396.2" stroke="#262B6E" stroke-width="1.1" fill="none"/><polyline points="64.0,394.6 64.0,397.8" stroke="#262B6E" stroke-width="1.1" fill="none"/><polyline points="64.0,399.4 64.0,405.7" stroke="#262B6E" stroke-width="1.1" fill="none"/><circle cx="15.0" cy="417.6" r="1.2" stroke="#262B6E" stroke-width="0.9" fill="none"/><circle cx="15.0" cy="427.1" r="1.2" stroke="#262B6E" stroke-width="0.9" fill="none"/><polyline points="15.0,426.1 18.5,419.6" stroke="#262B6E" stroke-width="1.1" fill="none"/><polyline points="15.0,414.1 15.0,416.4" stroke="#262B6E" stroke-width="1.1" fill="none"/><polyline points="15.0,428.3 15.0,430.1" stroke="#262B6E" stroke-width="1.1" fill="none"/><circle cx="36.5" cy="417.6" r="1.2" stroke="#262B6E" stroke-width="0.9" fill="none"/><circle cx="43.0" cy="417.6" r="1.2" stroke="#262B6E" stroke-width="0.9" fill="none"/><circle cx="39.5" cy="427.1" r="1.2" stroke="#262B6E" stroke-width="0.9" fill="none"/><polyline points="39.5,426.1 43.0,419.1" stroke="#262B6E" stroke-width="1.1" fill="none"/><polyline points="39.5,428.1 39.5,430.1" stroke="#262B6E" stroke-width="1.1" fill="none"/><circle cx="60.5" cy="417.6" r="1.2" stroke="#262B6E" stroke-width="0.9" fill="none"/><circle cx="67.5" cy="417.6" r="1.2" stroke="#262B6E" stroke-width="0.9" fill="none"/><circle cx="64.0" cy="427.6" r="1.2" stroke="#262B6E" stroke-width="0.9" fill="none"/><polyline points="60.5,414.1 60.5,416.4" stroke="#262B6E" stroke-width="1.1" fill="none"/><polyline points="67.5,414.1 67.5,416.4" stroke="#262B6E" stroke-width="1.1" fill="none"/><polyline points="64.0,415.1 64.0,426.1" stroke="#262B6E" stroke-width="1.1" fill="none"/><path d="M60.5,423.1q3.5,3 7,0" stroke="#262B6E" stroke-width="0.8" fill="none"/><polyline points="16.0,437.5 16.0,441.5" stroke="#262B6E" stroke-width="1.1" fill="none"/><path d="M16.0,441.5q2.5,0 0,2.5q2.5,0 0,2.5q2.5,0 0,2.5" stroke="#262B6E" stroke-width="1.1" fill="none"/><polyline points="16.0,449.0 16.0,453.5" stroke="#262B6E" stroke-width="1.1" fill="none"/><polyline points="12.0,446.0 15.0,446.0" stroke="#262B6E" stroke-width="1.1" fill="none"/><path d="M40.0,441.5q-3,1.5 0,4q3,2 0,4" stroke="#262B6E" stroke-width="1.1" fill="none"/><polyline points="40.0,437.5 40.0,441.5" stroke="#262B6E" stroke-width="1.1" fill="none"/><polyline points="40.0,449.5 40.0,453.5" stroke="#262B6E" stroke-width="1.1" fill="none"/><polyline points="40.0,439.5 41.5,439.5" stroke="#262B6E" stroke-width="1.1" fill="none"/><rect x="57.0" y="441.5" width="6.0" height="7.0" stroke="#262B6E" stroke-width="1.2" fill="none"/><polyline points="57.5,442.0 62.5,448.0" stroke="#262B6E" stroke-width="0.7" fill="none"/><polyline points="57.5,448.0 62.5,442.0" stroke="#262B6E" stroke-width="0.7" fill="none"/><polyline points="60.0,437.5 60.0,441.5" stroke="#262B6E" stroke-width="1.1" fill="none"/><polyline points="60.0,448.5 60.0,453.5" stroke="#262B6E" stroke-width="1.1" fill="none"/><polyline points="67.0,438.5 67.0,453.5" stroke="#262B6E" stroke-width="1.1" fill="none"/><polyline points="70.0,438.5 70.0,444.5" stroke="#262B6E" stroke-width="1.1" fill="none"/><polyline points="67.0,444.5 70.0,444.5" stroke="#262B6E" stroke-width="1.1" fill="none"/><circle cx="16.0" cy="466.9" r="1.8" stroke="#262B6E" stroke-width="1.1" fill="none"/><polyline points="16.0,468.9 16.0,474.9" stroke="#262B6E" stroke-width="1.1" fill="none"/><rect x="37.5" y="464.4" width="5.0" height="9.0" stroke="#262B6E" stroke-width="1.2" fill="none"/><polyline points="37.5,468.9 42.5,468.9" stroke="#262B6E" stroke-width="1.1" fill="none"/><circle cx="63.0" cy="466.9" r="2.6" stroke="#262B6E" stroke-width="1.1" fill="none"/><polyline points="65.6,466.9 71.0,466.9" stroke="#262B6E" stroke-width="1.1" fill="none"/><polyline points="63.0,469.5 63.0,474.9" stroke="#262B6E" stroke-width="1.1" fill="none"/><path d="M9.0,491.4q0,-7.8 7,-7.8q7,0 7,7.8v2q0,7.8 -7,7.8q-7,0 -7,-7.8z" stroke="#262B6E" stroke-width="1.3" fill="none"/><polyline points="16.0,482.9 16.0,487.4" stroke="#262B6E" stroke-width="1.1" fill="none"/><polyline points="12.5,487.9 19.5,487.9" stroke="#262B6E" stroke-width="1.8" fill="none"/><path d="M13.2,498.6l2.8,-3.6l2.8,3.6z" stroke="#262B6E" stroke-width="1.3" fill="none"/><polyline points="16.0,498.6 16.0,501.9" stroke="#262B6E" stroke-width="1.1" fill="none"/><path d="M33.0,491.4q0,-7.8 7,-7.8q7,0 7,7.8v2q0,7.8 -7,7.8q-7,0 -7,-7.8z" stroke="#262B6E" stroke-width="1.3" fill="none"/><polyline points="40.0,482.9 40.0,487.4" stroke="#262B6E" stroke-width="1.1" fill="none"/><polyline points="36.5,487.9 43.5,487.9" stroke="#262B6E" stroke-width="1.8" fill="none"/><polyline points="35.0,491.9 45.0,491.9" stroke="#262B6E" stroke-width="0.9" fill="none"/><path d="M37.0,495.9H42.0V499.6H39.0" stroke="#262B6E" stroke-width="1.7" fill="none"/><polyline points="40.0,499.6 40.0,501.9" stroke="#262B6E" stroke-width="1.1" fill="none"/><path d="M57.0,491.4q0,-7.8 7,-7.8q7,0 7,7.8v2q0,7.8 -7,7.8q-7,0 -7,-7.8z" stroke="#262B6E" stroke-width="1.3" fill="none"/><polyline points="61.2,482.9 61.2,487.4" stroke="#262B6E" stroke-width="1.1" fill="none"/><polyline points="59.0,487.9 63.4,487.9" stroke="#262B6E" stroke-width="1.8" fill="none"/><polyline points="66.8,482.9 66.8,487.4" stroke="#262B6E" stroke-width="1.1" fill="none"/><polyline points="64.6,487.9 69.0,487.9" stroke="#262B6E" stroke-width="1.8" fill="none"/><path d="M61.2,498.6l2.8,-3.6l2.8,3.6z" stroke="#262B6E" stroke-width="1.3" fill="none"/><polyline points="64.0,498.6 64.0,501.9" stroke="#262B6E" stroke-width="1.1" fill="none"/><path d="M9.0,514.8q0,-7.8 7,-7.8q7,0 7,7.8v2q0,7.8 -7,7.8q-7,0 -7,-7.8z" stroke="#262B6E" stroke-width="1.3" fill="none"/><polyline points="16.0,506.3 16.0,510.8" stroke="#262B6E" stroke-width="1.1" fill="none"/><polyline points="12.5,511.3 19.5,511.3" stroke="#262B6E" stroke-width="1.8" fill="none"/><polyline points="12.0,508.3 12.0,511.3" stroke="#262B6E" stroke-width="1.1" fill="none"/><polyline points="20.0,508.3 20.0,511.3" stroke="#262B6E" stroke-width="1.1" fill="none"/><polyline points="11.0,515.3 21.0,515.3" stroke="#262B6E" stroke-width="0.9" fill="none"/><path d="M13.0,519.3H18.0V523.0H15.0" stroke="#262B6E" stroke-width="1.7" fill="none"/><polyline points="16.0,523.0 16.0,525.3" stroke="#262B6E" stroke-width="1.1" fill="none"/><path d="M33.0,514.8q0,-7.8 7,-7.8q7,0 7,7.8v2q0,7.8 -7,7.8q-7,0 -7,-7.8z" stroke="#262B6E" stroke-width="1.3" fill="none"/><polyline points="40.0,506.3 40.0,510.8" stroke="#262B6E" stroke-width="1.1" fill="none"/><polyline points="36.5,511.3 43.5,511.3" stroke="#262B6E" stroke-width="1.8" fill="none"/><polyline points="36.0,508.3 36.0,511.3" stroke="#262B6E" stroke-width="1.1" fill="none"/><polyline points="44.0,508.3 44.0,511.3" stroke="#262B6E" stroke-width="1.1" fill="none"/><polyline points="35.0,515.3 45.0,515.3" stroke="#262B6E" stroke-width="0.9" fill="none"/><path d="M35.0,522.8q0,-3 2.8,-3q2,0 2.2,2q0.2,-2 2.2,-2q2.8,0 2.8,3" stroke="#262B6E" stroke-width="1.6" fill="none"/><path d="M57.0,514.8q0,-7.8 7,-7.8q7,0 7,7.8v2q0,7.8 -7,7.8q-7,0 -7,-7.8z" stroke="#262B6E" stroke-width="1.3" fill="none"/><polyline points="64.0,506.3 64.0,510.8" stroke="#262B6E" stroke-width="1.1" fill="none"/><polyline points="60.5,511.3 67.5,511.3" stroke="#262B6E" stroke-width="1.8" fill="none"/><polyline points="59.0,515.3 69.0,515.3" stroke="#262B6E" stroke-width="0.9" fill="none"/><polyline points="55.0,516.3 61.0,516.3" stroke="#262B6E" stroke-width="1.2" fill="none"/><path d="M61.0,519.3H66.0V523.0H63.0" stroke="#262B6E" stroke-width="1.7" fill="none"/><polyline points="64.0,523.0 64.0,525.3" stroke="#262B6E" stroke-width="1.1" fill="none"/><path d="M9.0,538.2q0,-7.8 7,-7.8q7,0 7,7.8v2q0,7.8 -7,7.8q-7,0 -7,-7.8z" stroke="#262B6E" stroke-width="1.3" fill="none"/><polyline points="13.2,529.7 13.2,534.2" stroke="#262B6E" stroke-width="1.1" fill="none"/><polyline points="11.0,534.7 15.4,534.7" stroke="#262B6E" stroke-width="1.8" fill="none"/><polyline points="18.8,529.7 18.8,534.2" stroke="#262B6E" stroke-width="1.1" fill="none"/><polyline points="16.6,534.7 21.0,534.7" stroke="#262B6E" stroke-width="1.8" fill="none"/><polyline points="12.0,531.7 12.0,534.7" stroke="#262B6E" stroke-width="1.1" fill="none"/><polyline points="20.0,531.7 20.0,534.7" stroke="#262B6E" stroke-width="1.1" fill="none"/><polyline points="11.0,538.7 21.0,538.7" stroke="#262B6E" stroke-width="0.9" fill="none"/><polyline points="7.0,538.7 9.0,538.7" stroke="#262B6E" stroke-width="1.1" fill="none"/><polyline points="23.0,538.7 25.0,538.7" stroke="#262B6E" stroke-width="1.1" fill="none"/><path d="M11.0,546.2q0,-3 2.8,-3q2,0 2.2,2q0.2,-2 2.2,-2q2.8,0 2.8,3" stroke="#262B6E" stroke-width="1.6" fill="none"/><path d="M33.0,538.2q0,-7.8 7,-7.8q7,0 7,7.8v2q0,7.8 -7,7.8q-7,0 -7,-7.8z" stroke="#262B6E" stroke-width="1.3" fill="none"/><polyline points="40.0,529.7 40.0,534.2" stroke="#262B6E" stroke-width="1.1" fill="none"/><polyline points="36.5,534.7 43.5,534.7" stroke="#262B6E" stroke-width="1.8" fill="none"/><polyline points="35.0,538.7 45.0,538.7" stroke="#262B6E" stroke-width="0.9" fill="none"/><polyline points="31.0,539.7 37.0,539.7" stroke="#262B6E" stroke-width="1.2" fill="none"/><path d="M37.0,542.7H42.0V546.4H39.0" stroke="#262B6E" stroke-width="1.7" fill="none"/><polyline points="40.0,546.4 40.0,548.7" stroke="#262B6E" stroke-width="1.1" fill="none"/><path d="M57.0,538.2q0,-7.8 7,-7.8q7,0 7,7.8v2q0,7.8 -7,7.8q-7,0 -7,-7.8z" stroke="#262B6E" stroke-width="1.3" fill="none"/><polyline points="61.2,529.7 61.2,534.2" stroke="#262B6E" stroke-width="1.1" fill="none"/><polyline points="59.0,534.7 63.4,534.7" stroke="#262B6E" stroke-width="1.8" fill="none"/><polyline points="66.8,529.7 66.8,534.2" stroke="#262B6E" stroke-width="1.1" fill="none"/><polyline points="64.6,534.7 69.0,534.7" stroke="#262B6E" stroke-width="1.8" fill="none"/><polyline points="60.0,531.7 60.0,534.7" stroke="#262B6E" stroke-width="1.1" fill="none"/><polyline points="68.0,531.7 68.0,534.7" stroke="#262B6E" stroke-width="1.1" fill="none"/><polyline points="59.0,538.7 69.0,538.7" stroke="#262B6E" stroke-width="0.9" fill="none"/><polyline points="55.0,537.7 59.0,537.7" stroke="#262B6E" stroke-width="1.0" fill="none"/><polyline points="55.0,540.2 59.0,540.2" stroke="#262B6E" stroke-width="1.0" fill="none"/><path d="M59.0,546.2q0,-3 2.8,-3q2,0 2.2,2q0.2,-2 2.2,-2q2.8,0 2.8,3" stroke="#262B6E" stroke-width="1.6" fill="none"/><path d="M9.0,561.6q0,-7.8 7,-7.8q7,0 7,7.8v2q0,7.8 -7,7.8q-7,0 -7,-7.8z" stroke="#262B6E" stroke-width="1.3" fill="none"/><polyline points="16.0,553.1 16.0,557.6" stroke="#262B6E" stroke-width="1.1" fill="none"/><polyline points="12.5,558.1 19.5,558.1" stroke="#262B6E" stroke-width="1.8" fill="none"/><polyline points="12.0,555.1 12.0,558.1" stroke="#262B6E" stroke-width="1.1" fill="none"/><polyline points="20.0,555.1 20.0,558.1" stroke="#262B6E" stroke-width="1.1" fill="none"/><path d="M33.0,561.6q0,-7.8 7,-7.8q7,0 7,7.8v2q0,7.8 -7,7.8q-7,0 -7,-7.8z" stroke="#262B6E" stroke-width="1.3" fill="none"/><polyline points="40.0,553.1 40.0,557.6" stroke="#262B6E" stroke-width="1.1" fill="none"/><polyline points="36.5,558.1 43.5,558.1" stroke="#262B6E" stroke-width="1.8" fill="none"/><polyline points="36.0,555.1 36.0,558.1" stroke="#262B6E" stroke-width="1.1" fill="none"/><polyline points="44.0,555.1 44.0,558.1" stroke="#262B6E" stroke-width="1.1" fill="none"/><path d="M57.0,561.6q0,-7.8 7,-7.8q7,0 7,7.8v2q0,7.8 -7,7.8q-7,0 -7,-7.8z" stroke="#262B6E" stroke-width="1.3" fill="none"/><polyline points="61.2,553.1 61.2,557.6" stroke="#262B6E" stroke-width="1.1" fill="none"/><polyline points="59.0,558.1 63.4,558.1" stroke="#262B6E" stroke-width="1.8" fill="none"/><polyline points="66.8,553.1 66.8,557.6" stroke="#262B6E" stroke-width="1.1" fill="none"/><polyline points="64.6,558.1 69.0,558.1" stroke="#262B6E" stroke-width="1.8" fill="none"/></g>
<rect x="78" y="59" width="13" height="503" fill="#FBFBF9" />
<rect x="78.5" y="59.5" width="12" height="12" rx="2" fill="#C3D3FD" stroke="#E8EFFF" stroke-width="1"/>
<path d="M81.5,67.5 L84.5,64 L87.5,67.5" stroke="#4D6185" stroke-width="1.6" fill="none" />
<rect x="78.5" y="72.5" width="12" height="104" rx="2" fill="url(#sbth)" stroke="#E8EFFF" stroke-width="1"/>
<line x1="81.50" y1="120.50" x2="87.50" y2="120.50" stroke="#F4F8FF" stroke-width="0.9" />
<line x1="82.50" y1="121.50" x2="88.50" y2="121.50" stroke="#93ACE4" stroke-width="0.8" />
<line x1="81.50" y1="122.50" x2="87.50" y2="122.50" stroke="#F4F8FF" stroke-width="0.9" />
<line x1="82.50" y1="123.50" x2="88.50" y2="123.50" stroke="#93ACE4" stroke-width="0.8" />
<line x1="81.50" y1="124.50" x2="87.50" y2="124.50" stroke="#F4F8FF" stroke-width="0.9" />
<line x1="82.50" y1="125.50" x2="88.50" y2="125.50" stroke="#93ACE4" stroke-width="0.8" />
<line x1="81.50" y1="126.50" x2="87.50" y2="126.50" stroke="#F4F8FF" stroke-width="0.9" />
<line x1="82.50" y1="127.50" x2="88.50" y2="127.50" stroke="#93ACE4" stroke-width="0.8" />
<rect x="78.5" y="549.5" width="12" height="12" rx="2" fill="#C3D3FD" stroke="#E8EFFF" stroke-width="1"/>
<path d="M81.5,553.5 L84.5,557 L87.5,553.5" stroke="#4D6185" stroke-width="1.6" fill="none" />
<rect x="3" y="23" width="794" height="1.2" fill="#F7F6F2" />
<text x="7.7" y="33.8" font-family="Liberation Sans" font-size="9.6" fill="#000" text-anchor="start" font-weight="normal" font-style="normal" textLength="23.4" lengthAdjust="spacingAndGlyphs" xml:space="preserve" stroke="#000" stroke-width="0.22">Fichier</text>
<text x="41" y="33.8" font-family="Liberation Sans" font-size="9.6" fill="#000" text-anchor="start" font-weight="normal" font-style="normal" textLength="25" lengthAdjust="spacingAndGlyphs" xml:space="preserve" stroke="#000" stroke-width="0.22">Edition</text>
<text x="76" y="33.8" font-family="Liberation Sans" font-size="9.6" fill="#000" text-anchor="start" font-weight="normal" font-style="normal" textLength="35" lengthAdjust="spacingAndGlyphs" xml:space="preserve" stroke="#000" stroke-width="0.22">Affichage</text>
<text x="121" y="33.8" font-family="Liberation Sans" font-size="9.6" fill="#000" text-anchor="start" font-weight="normal" font-style="normal" textLength="22" lengthAdjust="spacingAndGlyphs" xml:space="preserve" stroke="#000" stroke-width="0.22">Placer</text>
<text x="153" y="33.8" font-family="Liberation Sans" font-size="9.6" fill="#000" text-anchor="start" font-weight="normal" font-style="normal" textLength="43" lengthAdjust="spacingAndGlyphs" xml:space="preserve" stroke="#000" stroke-width="0.22">Accessoires</text>
<text x="206" y="33.8" font-family="Liberation Sans" font-size="9.6" fill="#000" text-anchor="start" font-weight="normal" font-style="normal" textLength="32" lengthAdjust="spacingAndGlyphs" xml:space="preserve" stroke="#000" stroke-width="0.22">Couleurs</text>
<text x="248" y="33.8" font-family="Liberation Sans" font-size="9.6" fill="#000" text-anchor="start" font-weight="normal" font-style="normal" textLength="29" lengthAdjust="spacingAndGlyphs" xml:space="preserve" stroke="#000" stroke-width="0.22">Options</text>
<text x="286" y="33.8" font-family="Liberation Sans" font-size="9.6" fill="#000" text-anchor="start" font-weight="normal" font-style="normal" textLength="4.5" lengthAdjust="spacingAndGlyphs" xml:space="preserve" stroke="#000" stroke-width="0.22">?</text>
<rect x="0" y="0" width="800" height="1" fill="#5B8EF5" />
<text x="164" y="14" font-family="Liberation Sans" font-size="9.5" fill="#E4EEFF" text-anchor="start" font-weight="normal" font-style="normal" textLength="13" lengthAdjust="spacingAndGlyphs" xml:space="preserve" >CD:</text>
<rect x="180.6" y="4.8" width="11.2" height="10.4" fill="#0B3FC4" stroke="#6E9BF5" stroke-width="0.8"/>
<polygon points="182.90,7.80 186.20,12.30 189.50,7.80" stroke="#fff" stroke-width="0.5" fill="#fff" />
<rect x="193" y="4.8" width="11.2" height="10.4" fill="#0B3FC4" stroke="#6E9BF5" stroke-width="0.8"/>
<polygon points="195.30,12.50 198.60,8.00 201.90,12.50" stroke="#fff" stroke-width="0.5" fill="#fff" />
<text x="212" y="14" font-family="Liberation Sans" font-size="9.5" fill="#E4EEFF" text-anchor="start" font-weight="normal" font-style="normal" textLength="19" lengthAdjust="spacingAndGlyphs" xml:space="preserve" >CPU:</text>
<text x="244" y="14" font-family="Liberation Sans" font-size="9.5" fill="#E4EEFF" text-anchor="start" font-weight="normal" font-style="normal" textLength="14" lengthAdjust="spacingAndGlyphs" xml:space="preserve" >3 %</text>
<rect x="263.8" y="4.6" width="40.6" height="11" fill="#0A37B8" stroke="#7AA6F7" stroke-width="0.8"/>
<line x1="269.60" y1="5.00" x2="269.60" y2="15.20" stroke="#3E7AE8" stroke-width="0.5" />
<line x1="275.40" y1="5.00" x2="275.40" y2="15.20" stroke="#3E7AE8" stroke-width="0.5" />
<line x1="281.20" y1="5.00" x2="281.20" y2="15.20" stroke="#3E7AE8" stroke-width="0.5" />
<line x1="287.00" y1="5.00" x2="287.00" y2="15.20" stroke="#3E7AE8" stroke-width="0.5" />
<line x1="292.80" y1="5.00" x2="292.80" y2="15.20" stroke="#3E7AE8" stroke-width="0.5" />
<line x1="298.60" y1="5.00" x2="298.60" y2="15.20" stroke="#3E7AE8" stroke-width="0.5" />
<line x1="264.00" y1="7.50" x2="304.00" y2="7.50" stroke="#3E7AE8" stroke-width="0.5" />
<line x1="264.00" y1="10.50" x2="304.00" y2="10.50" stroke="#3E7AE8" stroke-width="0.5" />
<line x1="264.20" y1="13.30" x2="304.00" y2="13.30" stroke="#9FD0FF" stroke-width="1.2" />
<path d="M313,9 L322,5 L332,8.5 L323,12.5 Z" stroke="#666" stroke-width="0.6" fill="#F4F4F4" />
<path d="M313,9 L323,12.5 L323,15 L313,11.5 Z" stroke="#444" stroke-width="0.6" fill="#9A9A9A" />
<path d="M323,12.5 L332,8.5 L332,11 L323,15 Z" stroke="#444" stroke-width="0.6" fill="#5A5A5A" />
<rect x="325.5" y="11.5" width="3" height="1.2" fill="#C8C8C8" />
<text x="340" y="14" font-family="Liberation Sans" font-size="9.5" fill="#E4EEFF" text-anchor="start" font-weight="normal" font-style="normal" textLength="27" lengthAdjust="spacingAndGlyphs" xml:space="preserve" >Volume:</text>
<text x="375" y="14" font-family="Liberation Sans" font-size="9.5" fill="#E4EEFF" text-anchor="start" font-weight="normal" font-style="normal" textLength="19" lengthAdjust="spacingAndGlyphs" xml:space="preserve" >50 %</text>
<circle cx="403.50" cy="8.80" r="3.60" stroke="#222" stroke-width="1.0" fill="#D0D0D0"/>
<circle cx="403.30" cy="8.60" r="1.50" stroke="#333" stroke-width="0.6" fill="#777"/>
<path d="M405.5,13.5 q3,0 4.5,-3 M406.5,15.5 q3.5,0 5,-4" stroke="#D8E0FF" stroke-width="0.9" fill="none" />
<rect x="416.8" y="4.6" width="46.2" height="11" fill="#0A37B8" stroke="#7AA6F7" stroke-width="0.8"/>
<line x1="419.00" y1="13.50" x2="461.00" y2="6.50" stroke="#9FC0FF" stroke-width="0.8" />
<rect x="437.5" y="6" width="4" height="8" fill="#0A37B8" stroke="#B8D0FF" stroke-width="0.8"/>
<text x="472" y="14" font-family="Liberation Sans" font-size="9.5" fill="#E4EEFF" text-anchor="start" font-weight="normal" font-style="normal" textLength="18" lengthAdjust="spacingAndGlyphs" xml:space="preserve" >RAM:</text>
<text x="499" y="14" font-family="Liberation Sans" font-size="9.5" fill="#E4EEFF" text-anchor="start" font-weight="normal" font-style="normal" textLength="37" lengthAdjust="spacingAndGlyphs" xml:space="preserve" >493/ 1792</text>
<rect x="544.5" y="5" width="6" height="6" fill="#1C2A50" />
<rect x="547.5" y="7.5" width="6" height="6" fill="#2A3A6A" />
<line x1="545.00" y1="14.00" x2="549.00" y2="16.00" stroke="#ddd" stroke-width="1" />
<text x="568" y="14" font-family="Liberation Sans" font-size="9.5" fill="#E4EEFF" text-anchor="start" font-weight="normal" font-style="normal" textLength="17" lengthAdjust="spacingAndGlyphs" xml:space="preserve" >0,0K</text>
<path d="M591,6 V13 M588,10 L591,13.5 L594,10" stroke="#E8F0FF" stroke-width="1.6" fill="none" />
<text x="608" y="14" font-family="Liberation Sans" font-size="9.5" fill="#E4EEFF" text-anchor="start" font-weight="normal" font-style="normal" textLength="17" lengthAdjust="spacingAndGlyphs" xml:space="preserve" >0,0K</text>
<path d="M632,14 V7 M629,10 L632,6.5 L635,10" stroke="#E8F0FF" stroke-width="1.6" fill="none" />
<rect x="744" y="18.4" width="15" height="1.4" fill="#0B2C8C" />
<rect x="744" y="19.8" width="15" height="1.2" fill="#CFE4FF" />
<rect x="761.5" y="18.4" width="15" height="1.4" fill="#0B2C8C" />
<rect x="761.5" y="19.8" width="15" height="1.2" fill="#CFE4FF" />
<rect x="779" y="18.4" width="15" height="1.4" fill="#0B2C8C" />
<rect x="779" y="19.8" width="15" height="1.2" fill="#CFE4FF" />
<rect x="779.5" y="18.4" width="14" height="1.4" fill="#6A2040" />
<rect x="209.5" y="40.8" width="17" height="15.6" rx="2" fill="#F8F7F2" stroke="#B8B6A8" stroke-width="0.9"/>
<rect x="227.5" y="40.8" width="17" height="15.6" rx="2" fill="#F8F7F2" stroke="#B8B6A8" stroke-width="0.9"/>
<rect x="245.5" y="40.8" width="17" height="15.6" rx="2" fill="#F8F7F2" stroke="#B8B6A8" stroke-width="0.9"/>
<rect x="486.5" y="40.8" width="16" height="15.6" rx="2" fill="#F8F7F2" stroke="#B8B6A8" stroke-width="0.9"/>
<rect x="588.5" y="40.8" width="18" height="15.6" rx="2" fill="#F8F7F2" stroke="#B8B6A8" stroke-width="0.9"/>
<rect x="739.5" y="40.8" width="17" height="15.6" rx="2" fill="#F8F7F2" stroke="#B8B6A8" stroke-width="0.9"/>
<path d="M8.5,42.5 H14.5 L17.5,45.5 V55.5 H8.5 Z" stroke="#6C83AE" stroke-width="0.9" fill="#EEF3FF" />
<path d="M26,48 L31,45 L37,46 L35,54 L27,54 Z" stroke="#A08A10" stroke-width="0.9" fill="#F4D84A" />
<path d="M31,44 q4,-2 6,1 l-2,3 z" stroke="#2E8A2E" stroke-width="0.8" fill="#4CC04C" />
<rect x="43.5" y="43" width="11" height="11.5" fill="#5858B8" stroke="#333A80" stroke-width="0.9"/>
<rect x="45.5" y="43.5" width="7" height="4" fill="#E8E8F8" />
<rect x="46" y="50.5" width="6" height="4" fill="#9090D0" />
<path d="M60,49 H72 V54 H60 Z" stroke="#4A5A80" stroke-width="0.9" fill="#B8C4E0" />
<rect x="62.5" y="44" width="7" height="5" fill="#FFFFFF" />
<path d="M62.5,44 h7 v5" stroke="#6A7AA0" stroke-width="0.7" fill="none" />
<rect x="63" y="52.5" width="6" height="2.5" fill="#FFFFFF" />
<path d="M79.5,43 H88 L90.5,45.5 V55 H79.5 Z" stroke="#6C83AE" stroke-width="0.9" fill="#EEF3FF" />
<circle cx="84.50" cy="48.50" r="3.30" stroke="#5A7AB0" stroke-width="1.2" fill="#D0E4FF"/>
<line x1="82.00" y1="51.50" x2="79.50" y2="54.50" stroke="#5A7AB0" stroke-width="1.4" />
<path d="M98,46 q6,-4 9,1 q2,5 -4,7" stroke="#1E5ED0" stroke-width="2.4" fill="none" />
<polygon points="96.00,43.00 96.00,49.50 101.50,47.00" stroke="#1E5ED0" stroke-width="0.5" fill="#1E5ED0" />
<path d="M124,46 q-6,-4 -9,1 q-2,5 4,7" stroke="#9E9C90" stroke-width="2.4" fill="none" />
<polygon points="126.00,43.00 126.00,49.50 120.50,47.00" stroke="#9E9C90" stroke-width="0.5" fill="#9E9C90" />
<rect x="132.5" y="44" width="11" height="9.5" fill="none" stroke="#333" stroke-width="1" stroke-dasharray="1.2,1.2"/>
<path d="M152,43 L159,52 M159,43 L152,52" stroke="#9E9C90" stroke-width="1.6" fill="none" />
<circle cx="152.00" cy="53.50" r="1.80" stroke="#9E9C90" stroke-width="1.2" fill="none"/>
<circle cx="159.00" cy="53.50" r="1.80" stroke="#9E9C90" stroke-width="1.2" fill="none"/>
<rect x="168.5" y="42.5" width="7" height="8" fill="#9E9C90" />
<rect x="172" y="46" width="8" height="9" fill="#A8A69A" />
<path d="M187,45 h8 l3,3 v7 h-11 z" stroke="#8E8C80" stroke-width="0.6" fill="#A8A69A" />
<line x1="213.50" y1="43.50" x2="213.50" y2="54.00" stroke="#333" stroke-width="1.1" />
<line x1="216.50" y1="43.50" x2="216.50" y2="54.00" stroke="#333" stroke-width="1.1" />
<line x1="219.50" y1="43.50" x2="219.50" y2="54.00" stroke="#333" stroke-width="1.1" />
<line x1="211.00" y1="46.50" x2="224.00" y2="46.50" stroke="#333" stroke-width="1.1" />
<line x1="211.00" y1="50.50" x2="224.00" y2="50.50" stroke="#333" stroke-width="1.1" />
<rect x="229.5" y="43.5" width="13" height="10" fill="none" stroke="#222" stroke-width="1.3"/>
<rect x="231.5" y="45.5" width="9" height="6" fill="none" stroke="#555" stroke-width="0.7" stroke-dasharray="1,1"/>
<rect x="247.5" y="45.5" width="13.5" height="7" fill="none" stroke="#333" stroke-width="1.1"/>
<line x1="248.00" y1="49.00" x2="261.00" y2="49.00" stroke="#333" stroke-width="1" />
<path d="M273,43 V51 H280" stroke="#222" stroke-width="1.1" fill="none" />
<line x1="281.00" y1="52.00" x2="284.00" y2="55.00" stroke="#C02020" stroke-width="1.8" />
<path d="M290,46 H300 L301,50 H290 Z" stroke="#222" stroke-width="1.1" fill="none" />
<line x1="298.00" y1="52.00" x2="301.00" y2="55.00" stroke="#C02020" stroke-width="1.8" />
<path d="M308,49 H316 M312,45 V53" stroke="#222" stroke-width="1.1" fill="none" />
<line x1="315.00" y1="52.00" x2="318.00" y2="55.00" stroke="#C02020" stroke-width="1.8" />
<line x1="326.00" y1="44.00" x2="336.00" y2="44.00" stroke="#222" stroke-width="1.1" />
<line x1="326.00" y1="46.50" x2="336.00" y2="46.50" stroke="#222" stroke-width="1.1" />
<line x1="326.00" y1="49.00" x2="336.00" y2="49.00" stroke="#222" stroke-width="1.1" />
<line x1="333.00" y1="52.00" x2="336.00" y2="55.00" stroke="#C02020" stroke-width="1.8" />
<path d="M344.0,44 H350 q2,1 3,4" stroke="#222" stroke-width="0.8" fill="none" />
<path d="M344.5,46 H351 q2,1 3,4" stroke="#222" stroke-width="0.8" fill="none" />
<path d="M345.0,48 H352 q2,1 3,4" stroke="#222" stroke-width="0.8" fill="none" />
<path d="M345.5,50 H353 q2,1 3,4" stroke="#222" stroke-width="0.8" fill="none" />
<line x1="352.00" y1="52.00" x2="355.00" y2="55.00" stroke="#C02020" stroke-width="1.8" />
<rect x="361.5" y="43.5" width="10" height="9" fill="none" stroke="#222" stroke-width="1.1"/>
<line x1="369.00" y1="52.00" x2="372.00" y2="55.00" stroke="#C02020" stroke-width="1.8" />
<circle cx="385.00" cy="48.00" r="4.50" stroke="#222" stroke-width="1.1" fill="none"/>
<line x1="388.00" y1="52.00" x2="391.00" y2="55.00" stroke="#C02020" stroke-width="1.8" />
<path d="M397,47 q3,-4 6,-1 q3,3 6,1" stroke="#222" stroke-width="1" fill="none" />
<line x1="405.00" y1="52.00" x2="408.00" y2="55.00" stroke="#C02020" stroke-width="1.8" />
<rect x="415.5" y="45.5" width="10" height="4" fill="none" stroke="#222" stroke-width="1"/>
<line x1="417.00" y1="47.50" x2="424.00" y2="47.50" stroke="#222" stroke-width="1" stroke-dasharray="1.5,1"/>
<line x1="424.00" y1="51.00" x2="427.00" y2="54.00" stroke="#C02020" stroke-width="1.8" />
<path d="M434,44 H444 V47 M439,44 V54 M436.5,54 H441.5" stroke="#2070D0" stroke-width="2.4" fill="none" />
<rect x="452" y="43" width="7" height="6" fill="#A03C60" />
<circle cx="455.50" cy="51.00" r="3.20" stroke="#40A040" stroke-width="0.6" fill="#70D070"/>
<rect x="457" y="45" width="4" height="4" fill="#C04040" />
<line x1="461.00" y1="51.00" x2="464.00" y2="54.00" stroke="#C02020" stroke-width="1.8" />
<path d="M471,52 L477,43 L482,47 L478,54 Z" stroke="#5A4A30" stroke-width="0.8" fill="#E6B070" />
<line x1="470.00" y1="54.00" x2="476.00" y2="54.00" stroke="#3050C0" stroke-width="1.4" />
<path d="M489,53 L496,44 L500,47 L494,54 Z" stroke="#8A5050" stroke-width="0.8" fill="#E09090" />
<line x1="489.00" y1="54.50" x2="500.00" y2="54.50" stroke="#40A040" stroke-width="1.6" />
<circle cx="510.00" cy="47.00" r="3.80" stroke="#3A6AB0" stroke-width="1.3" fill="#DDF0FF"/>
<line x1="513.00" y1="50.00" x2="517.00" y2="54.00" stroke="#C08040" stroke-width="1.8" />
<circle cx="536.00" cy="48.00" r="4.00" stroke="#A8A698" stroke-width="1.8" fill="none"/>
<line x1="539.00" y1="51.00" x2="542.00" y2="54.00" stroke="#A8A698" stroke-width="1.8" />
<path d="M549.5,47 h12 v7 h-12 z" stroke="#222" stroke-width="0.6" fill="#444" />
<circle cx="555.50" cy="50.50" r="2.30" stroke="#999" stroke-width="0.8" fill="#222"/>
<rect x="552" y="44.5" width="5" height="2.5" fill="#444" />
<rect x="568.5" y="43" width="10" height="12" fill="#BFD0F0" stroke="#6A80B0" stroke-width="0.9"/>
<line x1="570.50" y1="46.00" x2="576.50" y2="46.00" stroke="#4A60A0" stroke-width="0.8" />
<line x1="570.50" y1="48.50" x2="576.50" y2="48.50" stroke="#4A60A0" stroke-width="0.8" />
<line x1="570.50" y1="51.00" x2="576.50" y2="51.00" stroke="#4A60A0" stroke-width="0.8" />
<path d="M591.5,55 L592.3,51.5 L599.5,43.8 Q601.5,42 603.2,43.6 Q604.6,45.5 602.8,47.4 L595.5,54.3 Z" stroke="#000" stroke-width="0.9" fill="#111" />
<line x1="595.00" y1="49.50" x2="600.50" y2="44.00" stroke="#FFFFFF" stroke-width="0.8" opacity="0.35"/>
<path d="M609.5,55 L610.3,51.5 L617.5,43.8 Q619.5,42 621.2,43.6 Q622.6,45.5 620.8,47.4 L613.5,54.3 Z" stroke="#0A1A90" stroke-width="0.9" fill="#1A2EC8" />
<line x1="613.00" y1="49.50" x2="618.50" y2="44.00" stroke="#FFFFFF" stroke-width="0.8" opacity="0.35"/>
<path d="M627.5,55 L628.3,51.5 L635.5,43.8 Q637.5,42 639.2,43.6 Q640.6,45.5 638.8,47.4 L631.5,54.3 Z" stroke="#10A010" stroke-width="0.9" fill="#28D028" />
<line x1="631.00" y1="49.50" x2="636.50" y2="44.00" stroke="#FFFFFF" stroke-width="0.8" opacity="0.35"/>
<path d="M645.5,55 L646.3,51.5 L653.5,43.8 Q655.5,42 657.2,43.6 Q658.6,45.5 656.8,47.4 L649.5,54.3 Z" stroke="#20C0D0" stroke-width="0.9" fill="#40E8F0" />
<line x1="649.00" y1="49.50" x2="654.50" y2="44.00" stroke="#FFFFFF" stroke-width="0.8" opacity="0.35"/>
<path d="M662.5,55 L663.3,51.5 L670.5,43.8 Q672.5,42 674.2,43.6 Q675.6,45.5 673.8,47.4 L666.5,54.3 Z" stroke="#A00000" stroke-width="0.9" fill="#E01818" />
<line x1="666.00" y1="49.50" x2="671.50" y2="44.00" stroke="#FFFFFF" stroke-width="0.8" opacity="0.35"/>
<path d="M680.5,55 L681.3,51.5 L688.5,43.8 Q690.5,42 692.2,43.6 Q693.6,45.5 691.8,47.4 L684.5,54.3 Z" stroke="#B010B0" stroke-width="0.9" fill="#F040F0" />
<line x1="684.00" y1="49.50" x2="689.50" y2="44.00" stroke="#FFFFFF" stroke-width="0.8" opacity="0.35"/>
<path d="M698.5,55 L699.3,51.5 L706.5,43.8 Q708.5,42 710.2,43.6 Q711.6,45.5 709.8,47.4 L702.5,54.3 Z" stroke="#D0D000" stroke-width="0.9" fill="#F8F820" />
<line x1="702.00" y1="49.50" x2="707.50" y2="44.00" stroke="#FFFFFF" stroke-width="0.8" opacity="0.35"/>
<path d="M716.5,55 L717.3,51.5 L724.5,43.8 Q726.5,42 728.2,43.6 Q729.6,45.5 727.8,47.4 L720.5,54.3 Z" stroke="#A8A69A" stroke-width="0.9" fill="#C4C2B8" />
<line x1="720.00" y1="49.50" x2="725.50" y2="44.00" stroke="#FFFFFF" stroke-width="0.8" opacity="0.35"/>
<g transform="rotate(-45 748 49)"><path d="M743.5,51 V47 A4.5,4.5 0 0 1 752.5,47 V51" stroke="#2A5CC8" stroke-width="3.4" fill="none"/><path d="M743.5,51 V54 M752.5,51 V54" stroke="#E0E0E8" stroke-width="3.4" fill="none"/><path d="M743.5,54 V56 M752.5,54 V56" stroke="#C02020" stroke-width="3.4" fill="none"/></g>
<path d="M762,45 h4 v4 h-4z" stroke="#2050A0" stroke-width="0.8" fill="#60A0F0" />
<circle cx="769.00" cy="51.00" r="2.80" stroke="#222" stroke-width="0.6" fill="#222"/>
<line x1="762.00" y1="54.00" x2="766.00" y2="50.00" stroke="#2050A0" stroke-width="0.8" />
<path d="M778.5,43 H786 L789,46 V55 H778.5 Z" stroke="#6C83AE" stroke-width="0.9" fill="#F4F8FF" />
<path d="M781,49.5 L783,52 L787,46.5" stroke="#D02020" stroke-width="1.6" fill="none" />
<rect x="3" y="562" width="794" height="11.3" fill="#ECE9D8" />
<rect x="3" y="562" width="794" height="1" fill="#BDBAA8" />
<rect x="80" y="563" width="1" height="10.5" fill="#C9C6B6" />
<rect x="81" y="563" width="1" height="10.5" fill="#FFFFFF" />
<rect x="159.4" y="563" width="1" height="10.5" fill="#C9C6B6" />
<rect x="160.4" y="563" width="1" height="10.5" fill="#FFFFFF" />
<rect x="264" y="563" width="1" height="10.5" fill="#C9C6B6" />
<rect x="265" y="563" width="1" height="10.5" fill="#FFFFFF" />
<rect x="526.4" y="563" width="1" height="10.5" fill="#C9C6B6" />
<rect x="527.4" y="563" width="1" height="10.5" fill="#FFFFFF" />
<rect x="629" y="563" width="1" height="10.5" fill="#C9C6B6" />
<rect x="630" y="563" width="1" height="10.5" fill="#FFFFFF" />
<rect x="734" y="563" width="1" height="10.5" fill="#C9C6B6" />
<rect x="735" y="563" width="1" height="10.5" fill="#FFFFFF" />
<text x="9.6" y="572" font-family="Liberation Sans" font-size="9.6" fill="#000" text-anchor="start" font-weight="bold" font-style="normal" textLength="58.4" lengthAdjust="spacingAndGlyphs" xml:space="preserve" >X= 492  Y= 9</text>
<text x="90" y="572" font-family="Liberation Sans" font-size="9.6" fill="#000" text-anchor="start" font-weight="bold" font-style="normal" textLength="53" lengthAdjust="spacingAndGlyphs" xml:space="preserve" >L= 24  H= 3</text>
<text x="197" y="572" font-family="Liberation Sans" font-size="9.6" fill="#000" text-anchor="start" font-weight="bold" font-style="normal" textLength="33" lengthAdjust="spacingAndGlyphs" xml:space="preserve" >Gomme</text>
<text x="372" y="572" font-family="Liberation Sans" font-size="9.6" fill="#000" text-anchor="start" font-weight="bold" font-style="normal" textLength="50" lengthAdjust="spacingAndGlyphs" xml:space="preserve" >Etat normal</text>
<text x="541" y="572" font-family="Liberation Sans" font-size="9.6" fill="#000" text-anchor="start" font-weight="bold" font-style="normal" textLength="78" lengthAdjust="spacingAndGlyphs" xml:space="preserve" >Couleurs 24 Bit(s)</text>
<text x="662.5" y="572" font-family="Liberation Sans" font-size="9.6" fill="#000" text-anchor="start" font-weight="bold" font-style="normal" textLength="43.7" lengthAdjust="spacingAndGlyphs" xml:space="preserve" >Format A5</text>
<rect x="794" y="565" width="1.3" height="1.3" fill="#A09E90" />
<rect x="794" y="568.5" width="1.3" height="1.3" fill="#A09E90" />
<rect x="790.5" y="568.5" width="1.3" height="1.3" fill="#A09E90" />
<rect x="794" y="572" width="1.3" height="1.3" fill="#A09E90" />
<rect x="790.5" y="572" width="1.3" height="1.3" fill="#A09E90" />
<rect x="787" y="572" width="1.3" height="1.3" fill="#A09E90" />
<rect x="0" y="574" width="800" height="1" fill="#3B78E8" />
<rect x="0" y="575" width="800" height="1.2" fill="#5E9BF8" />
<path d="M0,577 H98 q6,0 6,6 V600 H0 Z" fill="url(#start)"/>
<path d="M0,577.5 H98 q5.5,0 5.5,5.5" stroke="#7ACC7A" stroke-width="1" fill="none" />
<g transform="translate(15.5,588) skewY(-8) translate(-15.5,-588)"><path d="M9,582.5 q3,-1.2 6,0.3 v5.2 q-3,-1.5 -6,-0.3 z" fill="#E8602A"/><path d="M16,582.8 q3,1.3 6,0 v5.2 q-3,1.3 -6,0 z" fill="#8CC43A"/><path d="M8.5,588.7 q3,-1.2 6,0.3 v5.2 q-3,-1.5 -6,-0.3 z" fill="#4A86E8"/><path d="M15.5,589 q3,1.3 6,0 v5.2 q-3,1.3 -6,0 z" fill="#F2C43A"/></g>
<text x="28" y="594.6" font-family="Liberation Sans" font-size="14" fill="#103010" text-anchor="start" font-weight="bold" font-style="italic" textLength="60" lengthAdjust="spacingAndGlyphs" xml:space="preserve" opacity="0.45">démarrer</text>
<text x="27" y="594.2" font-family="Liberation Sans" font-size="14" fill="#FFFFFF" text-anchor="start" font-weight="bold" font-style="italic" textLength="60" lengthAdjust="spacingAndGlyphs" xml:space="preserve" >démarrer</text>
<rect x="113.5" y="579" width="1.5" height="1.5" fill="#1A3E9A" />
<rect x="113.5" y="582" width="1.5" height="1.5" fill="#1A3E9A" />
<rect x="113.5" y="585" width="1.5" height="1.5" fill="#1A3E9A" />
<rect x="113.5" y="588" width="1.5" height="1.5" fill="#1A3E9A" />
<rect x="113.5" y="591" width="1.5" height="1.5" fill="#1A3E9A" />
<rect x="113.5" y="594" width="1.5" height="1.5" fill="#1A3E9A" />
<rect x="113.5" y="597" width="1.5" height="1.5" fill="#1A3E9A" />
<rect x="183.5" y="579" width="1.5" height="1.5" fill="#1A3E9A" />
<rect x="183.5" y="582" width="1.5" height="1.5" fill="#1A3E9A" />
<rect x="183.5" y="585" width="1.5" height="1.5" fill="#1A3E9A" />
<rect x="183.5" y="588" width="1.5" height="1.5" fill="#1A3E9A" />
<rect x="183.5" y="591" width="1.5" height="1.5" fill="#1A3E9A" />
<rect x="183.5" y="594" width="1.5" height="1.5" fill="#1A3E9A" />
<rect x="183.5" y="597" width="1.5" height="1.5" fill="#1A3E9A" />
<circle cx="130.00" cy="587.50" r="5.20" stroke="#3A6AB8" stroke-width="1" fill="#E4F2FF"/>
<path d="M127.2,587.8 h5.4 a2.8,2.8 0 1 0 -1,2.3" stroke="#2A6AD0" stroke-width="1.5" fill="none" />
<path d="M133,582 l2.5,1 l-1,2.2" stroke="#F0F0F0" stroke-width="1.2" fill="none" />
<ellipse cx="148" cy="587.5" rx="6.5" ry="3.2" transform="rotate(-40 148 587.5)" stroke="#D8B040" stroke-width="1.2" fill="none"/>
<path d="M144.8,588 h6.6 a3.4,3.4 0 1 0 -1,2.6" stroke="#2C8CEA" stroke-width="2.1" fill="none" />
<circle cx="166.00" cy="587.50" r="5.20" stroke="#F0E8E0" stroke-width="1.6" fill="#2A4AA0"/>
<path d="M161.5,590 a5.2,5.2 0 0 0 8,1.5" stroke="#E89030" stroke-width="1.4" fill="none" />
<polygon points="164.80,585.20 164.80,589.80 168.60,587.50" stroke="#fff" stroke-width="0.5" fill="#fff" />
<rect x="188.5" y="578.5" width="123" height="19.5" rx="2.5" fill="#3D82F2" stroke="#5A92F4" stroke-width="1"/>
<text x="211" y="591.8" font-family="Liberation Sans" font-size="10.5" fill="#FFFFFF" text-anchor="start" font-weight="normal" font-style="normal" textLength="21" lengthAdjust="spacingAndGlyphs" xml:space="preserve" >Funky</text>
<rect x="313.5" y="578.5" width="122" height="19.5" rx="2.5" fill="#3D82F2" stroke="#5A92F4" stroke-width="1"/>
<text x="336" y="591.8" font-family="Liberation Sans" font-size="10.5" fill="#FFFFFF" text-anchor="start" font-weight="normal" font-style="normal" textLength="88" lengthAdjust="spacingAndGlyphs" xml:space="preserve" >Lecteur Windows Media</text>
<rect x="438.5" y="578.5" width="123" height="19.5" rx="2.5" fill="#1C46BA" stroke="#1A3C9E" stroke-width="1"/>
<text x="461" y="591.8" font-family="Liberation Sans" font-size="10.5" fill="#FFFFFF" text-anchor="start" font-weight="normal" font-style="normal" textLength="88" lengthAdjust="spacingAndGlyphs" xml:space="preserve" >DessElec 2000 - C:\D...</text>
<path d="M196,583.5 h4 l1,1.5 h6 v8 h-11 z" stroke="#9A7A10" stroke-width="0.7" fill="#F2D36A" />
<path d="M196.5,587 h10.5 l-1,6 h-10 z" stroke="#B08A10" stroke-width="0.6" fill="#FBE89A" />
<circle cx="326.50" cy="587.50" r="5.00" stroke="#E8E0D0" stroke-width="1.6" fill="#2A4A98"/>
<polygon points="325.20,585.30 325.20,589.70 328.80,587.50" stroke="#fff" stroke-width="0.5" fill="#fff" />
<path d="M446,584 l8,4 l-8,4 z M450,583 v10" stroke="#E8E8E8" stroke-width="1.2" fill="#333" />
<path d="M644,575.5 H800 V600 H644 Z" fill="url(#tray)"/>
<line x1="644.00" y1="576.00" x2="644.00" y2="600.00" stroke="#0B5CB8" stroke-width="1.4" />
<path d="M652.5,583 l5.5,-2 l5.5,2 v4 q0,6 -5.5,8 q-5.5,-2 -5.5,-8 z" stroke="#806000" stroke-width="0.8" fill="#F6D32C" />
<rect x="657.3" y="584" width="1.6" height="5.5" fill="#333" />
<rect x="657.3" y="590.5" width="1.6" height="1.6" fill="#333" />
<rect x="666" y="583" width="11.5" height="9.5" fill="#D62020" />
<text x="666.5" y="591" font-family="Liberation Sans" font-size="7.5" fill="#FFF" text-anchor="start" font-weight="bold" font-style="italic" textLength="10.5" lengthAdjust="spacingAndGlyphs" xml:space="preserve" >ATI</text>
<path d="M680.5,585 h3 l5,-4.5 v14 l-5,-4.5 h-3 z" stroke="#602010" stroke-width="0.7" fill="#E06030" />
<rect x="693" y="581" width="13" height="14" fill="#20A040" />
<path d="M695.5,588 l3.5,3.5 l5,-6.5" stroke="#FFF" stroke-width="2" fill="none" />
<path d="M711,593 v-7 q1,-1 2,0 v4 v-6 q1,-1 2,0 v6 v-3 q1,-1 2,0 v5 q0,3 -3,3 h-2 q-2,0 -1,-2" stroke="#333" stroke-width="0.8" fill="#FFF" />
<rect x="722" y="582.5" width="7" height="7" fill="#263A80" />
<rect x="725" y="586" width="7" height="7" fill="#5A72C0" />
<rect x="726" y="587" width="5" height="4" fill="#9AB0F0" />
<circle cx="742.00" cy="587.00" r="5.00" stroke="#555" stroke-width="0.8" fill="#C0C0C0"/>
<circle cx="742.00" cy="587.00" r="1.50" stroke="#555" stroke-width="0.5" fill="#666"/>
<line x1="744.00" y1="591.00" x2="748.00" y2="594.00" stroke="#D0D8FF" stroke-width="1" />
<path d="M752,585 l6,-3 l4.5,6 l-6,3 z" stroke="#226622" stroke-width="0.6" fill="#60C060" />
<rect x="753" y="591" width="8" height="2" fill="#555" />
<text x="767" y="591.2" font-family="Liberation Sans" font-size="10" fill="#FFFFFF" text-anchor="start" font-weight="normal" font-style="normal" textLength="22.5" lengthAdjust="spacingAndGlyphs" xml:space="preserve" >20:51</text>
</svg>
</body></html>
